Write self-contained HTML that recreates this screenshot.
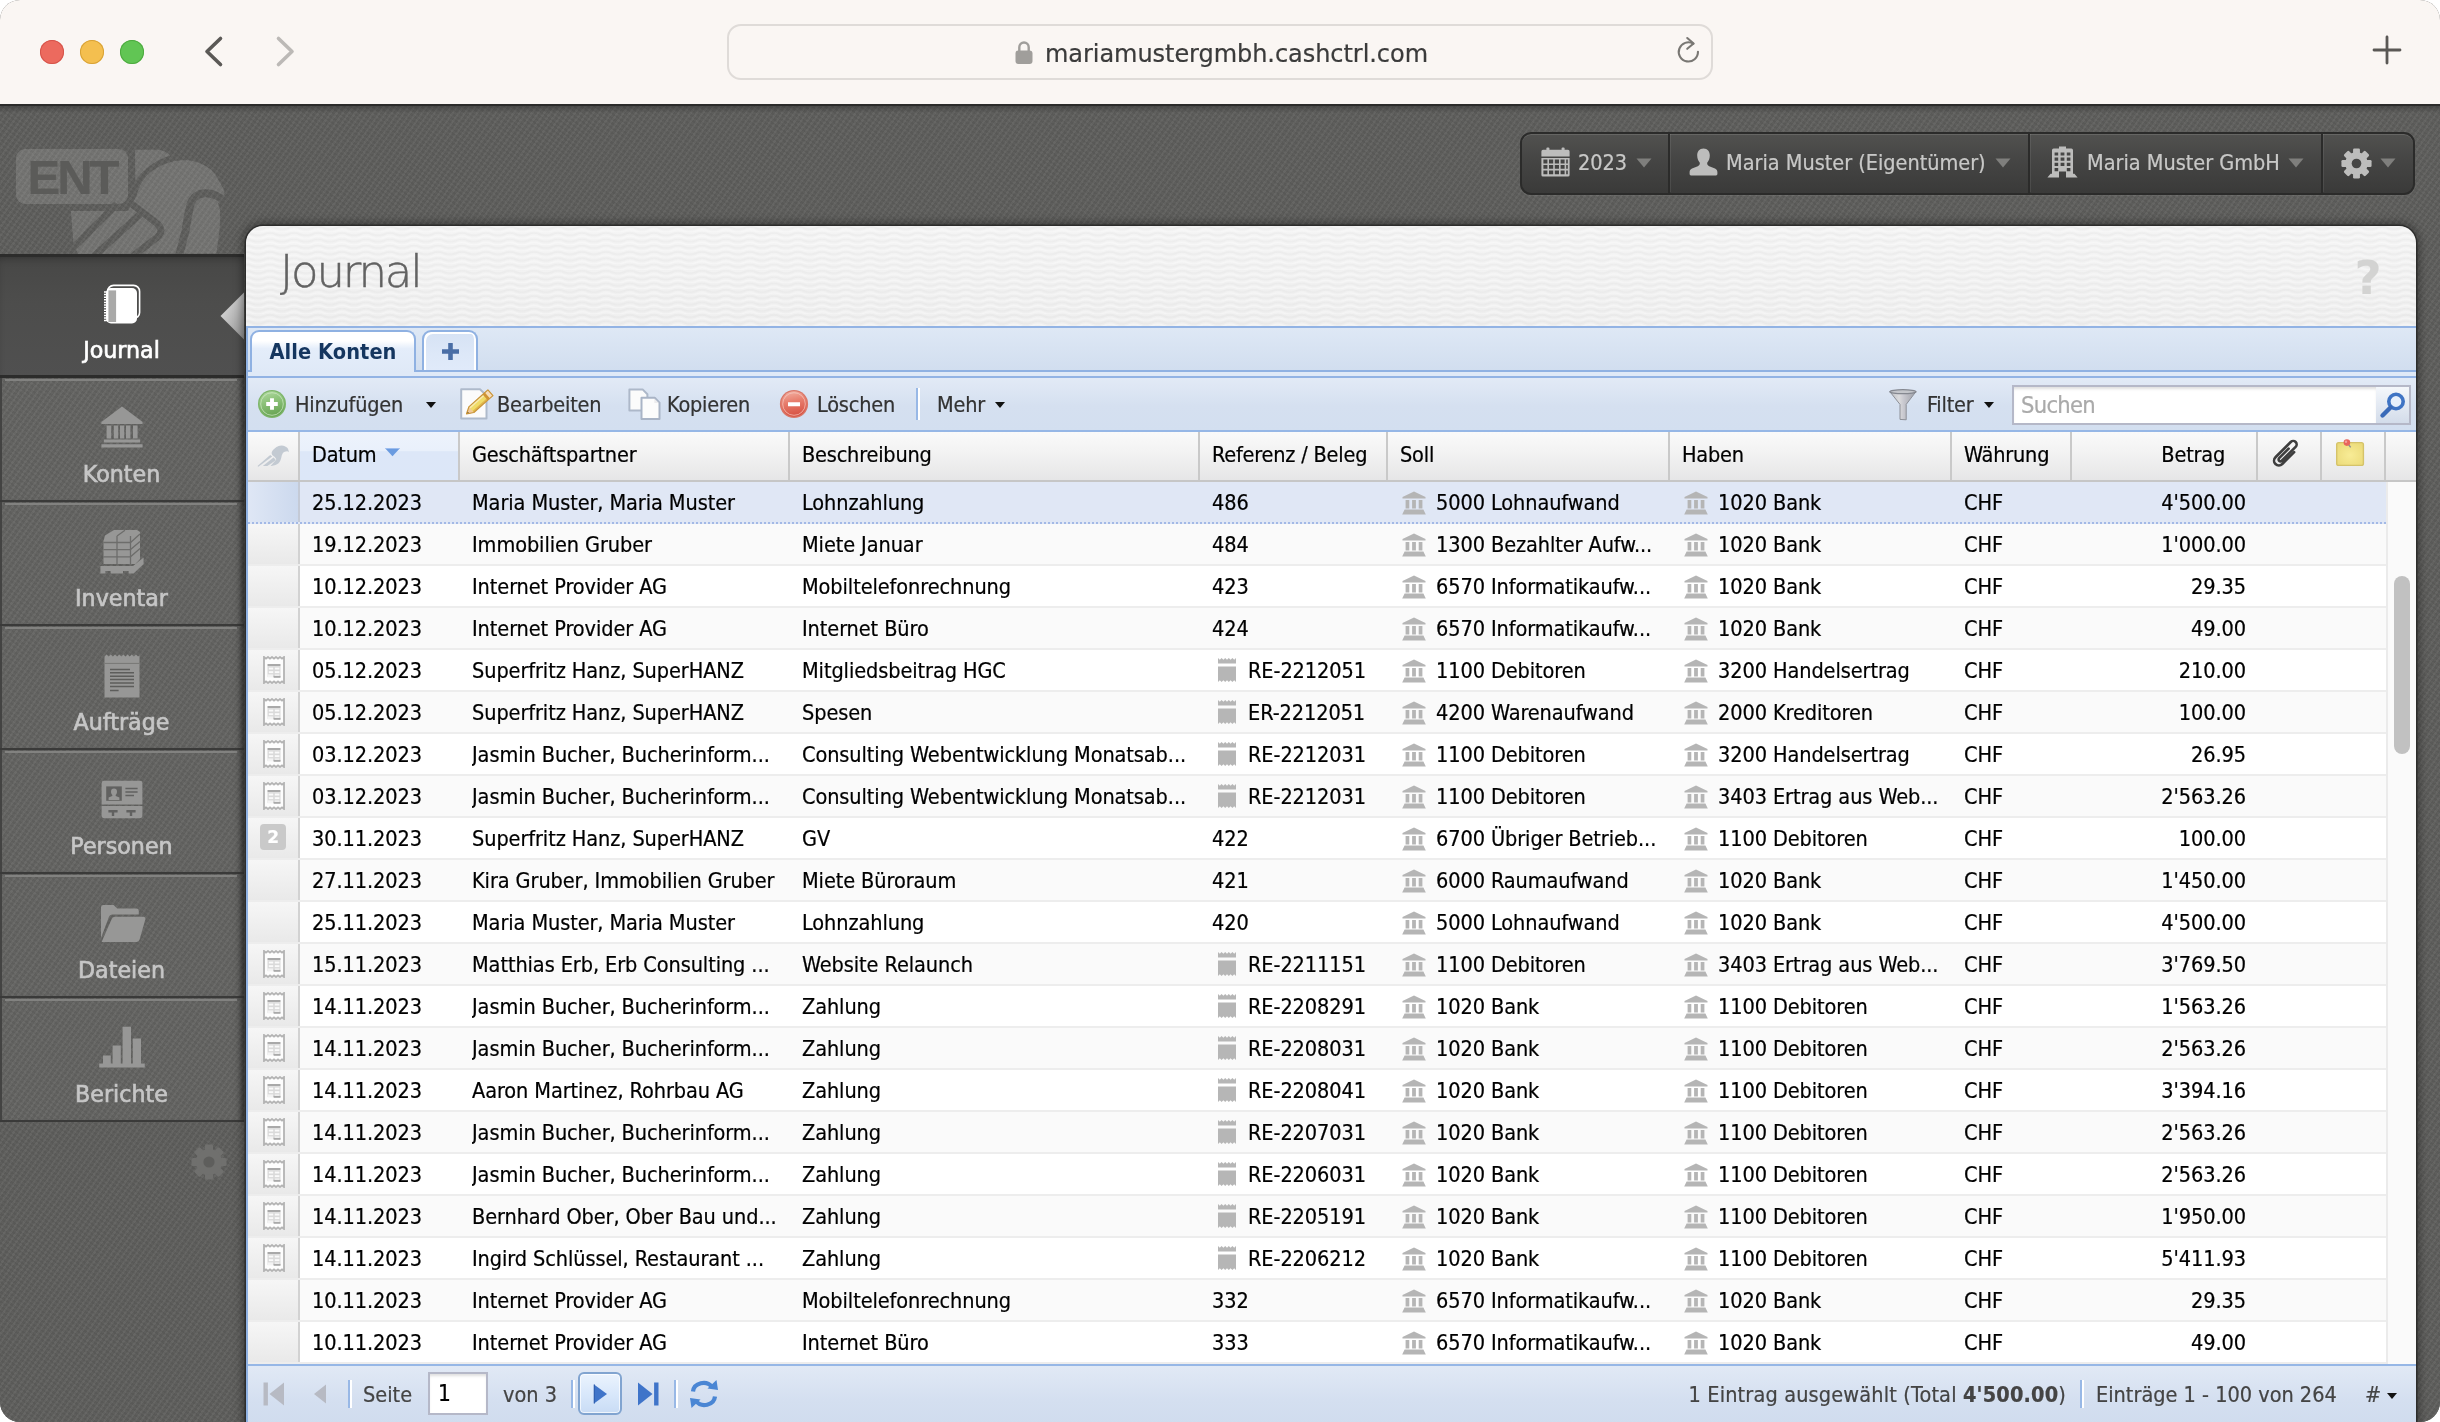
<!DOCTYPE html><html lang="de"><head><meta charset="utf-8"><title>Journal</title><style>
html,body{margin:0;padding:0;background:#fff;}
body{width:2440px;height:1422px;overflow:hidden;position:relative;font-family:"DejaVu Sans Condensed","Liberation Sans",sans-serif;font-size:21.5px;color:#000;-webkit-text-stroke:0.22px currentColor;}
*{box-sizing:border-box;}
.abs{position:absolute;}
.win{position:absolute;left:0;top:0;width:2440px;height:1422px;border-radius:20px;overflow:hidden;background:#5e5e5c;will-change:transform;}
.chrome{position:absolute;left:0;top:0;width:2440px;height:104px;background:#faf6f3;}
.tl{position:absolute;top:40px;width:24px;height:24px;border-radius:50%;}
.url{position:absolute;left:727px;top:24px;width:986px;height:56px;border:2px solid #dfdbd8;border-radius:14px;background:#faf6f3;}
.urltxt{position:absolute;left:1045px;top:33.500px;height:40px;line-height:40px;font-family:"DejaVu Sans","Liberation Sans",sans-serif;font-size:24px;color:#3b3b3b;white-space:nowrap;letter-spacing:-0.05px;}
.app{position:absolute;left:0;top:104px;width:2440px;height:1318px;background-color:#5e5e5c;
  background-image:repeating-linear-gradient(125deg,rgba(255,255,255,.03) 0,rgba(255,255,255,.03) 2px,rgba(0,0,0,.03) 2px,rgba(0,0,0,.03) 5px),repeating-linear-gradient(35deg,rgba(255,255,255,.02) 0,rgba(255,255,255,.02) 2px,rgba(0,0,0,.02) 2px,rgba(0,0,0,.02) 4px);}
.apptop{position:absolute;left:0;top:0;width:2440px;height:10px;background:linear-gradient(#2b2b2a 0,#2b2b2a 1.500px,rgba(50,50,49,.5) 2px,rgba(94,94,92,0) 9px);}
/* sidebar */
.sbi{position:absolute;left:0;width:244px;height:124px;background-color:rgba(255,255,255,.035);box-shadow:inset 2px 0 0 #434342,inset -5px 0 5px -2px rgba(0,0,0,.35);}
.sbi .hl{position:absolute;left:5px;right:7px;top:1px;height:2px;background:#828280;}
.sbi .dl{position:absolute;left:0;right:0;bottom:0;height:2px;background:#3a3a39;}
.sbi.act{background:linear-gradient(#474746,#4d4d4c 40%,#505050);box-shadow:inset 0 3px 0 #2c2c2b,inset 0 -3px 0 #2c2c2b,inset 0 8px 8px -4px rgba(0,0,0,.3);}
.sbl{position:absolute;left:0;width:243px;text-align:center;top:78px;height:36px;line-height:36px;font-family:"DejaVu Sans","Liberation Sans",sans-serif;font-size:22.2px;color:#c6c6c6;-webkit-text-stroke:0.65px #c6c6c6;letter-spacing:0;}
.act .sbl{color:#fff;-webkit-text-stroke:0.65px #fff;}
.sbic{position:absolute;left:0;top:0;}
/* top-right buttons */
.tbg{position:absolute;border-radius:11px;border:2px solid #2b2b2a;background:linear-gradient(#51514f,#454544 45%,#3a3a39);box-shadow:inset 0 1px 0 rgba(255,255,255,.12),0 1px 0 rgba(255,255,255,.06);}
.tbt{position:absolute;top:38px;height:42px;line-height:42px;font-size:21.5px;color:#c8c8c7;white-space:nowrap;letter-spacing:-0.02px;}
/* panel */
.panel{position:absolute;left:246px;top:122px;width:2170px;height:1240px;border-radius:17px 17px 0 0;background:linear-gradient(#f4f4f4 0,#efefef 100px,#efefef 100%);box-shadow:0 0 0 1.500px #2c2c2b,0 0 9px 4px rgba(0,0,0,.34);overflow:hidden;}
.pwave{position:absolute;left:0;top:0;}
.ptitle{position:absolute;left:34px;top:16px;height:60px;line-height:60px;font-family:"DejaVu Sans Light","DejaVu Sans","Liberation Sans",sans-serif;font-weight:200;font-size:45px;letter-spacing:-2.15px;color:#626262;-webkit-text-stroke:0.45px #626262;white-space:nowrap;}
.phelp{position:absolute;left:2106px;top:26px;width:32px;height:52px;line-height:52px;text-align:center;font-family:"DejaVu Sans","Liberation Sans",sans-serif;font-weight:bold;font-size:46px;color:#d3d3d2;}
.lb{position:absolute;left:0;top:100px;width:2px;height:1140px;background:#8fb1e2;}
.rb{position:absolute;left:2168px;top:100px;width:2px;height:1140px;background:#a9c3ea;}
.tabbar{position:absolute;left:0;top:100px;width:2170px;height:52px;border-top:2px solid #92b3e4;background:linear-gradient(#dee8f5,#cfdcee);}
.strip{position:absolute;left:0;top:44px;width:2170px;height:8px;background:#dfe9f7;border-top:2px solid #8fb1e2;border-bottom:2px solid #92b3e4;top:42px;}
.tab{position:absolute;top:2px;height:42px;border:2px solid #8fb1e2;border-bottom:none;border-radius:9px 9px 0 0;}
.tab.on{left:4px;width:166px;height:42px;background:linear-gradient(#ffffff 0,#ffffff 22%,#e4edfa 42%,#dfe9f7 100%);z-index:2;}
.tab.on span{position:absolute;left:0;right:0;top:0;height:40px;line-height:40px;text-align:center;font-weight:bold;font-size:21.6px;color:#15365f;letter-spacing:0.05px;-webkit-text-stroke:0;}
.tab.on:after{content:'';position:absolute;left:0;right:0;bottom:-2px;height:2px;background:#dfe9f7;}
.tab.off{left:176px;width:56px;height:40px;background:linear-gradient(#d6e2f4,#dde8f8 60%,#e0eafa);box-shadow:inset 2px 2px 0 #fff,inset -2px 0 0 #fff;}
.tb{position:absolute;left:0;top:152px;width:2170px;height:54px;border-bottom:2px solid #96b7e6;background:linear-gradient(#e2eaf6,#d5e0f0 55%,#d3dff0);}
.tbl{position:absolute;top:1px;height:52px;line-height:52px;color:#333;white-space:nowrap;font-size:21.5px;letter-spacing:-0.2px;}
.dd{position:absolute;width:0;height:0;border-left:5.500px solid transparent;border-right:5.500px solid transparent;border-top:6.500px solid #111;}
.sep{position:absolute;width:4px;background:linear-gradient(90deg,#98b8e6 0,#98b8e6 50%,#fff 50%,#fff 100%);}
.search{position:absolute;left:1766px;top:7px;width:366px;height:40px;background:#fff;border:2px solid #b5b8c8;box-shadow:inset 0 3px 3px -1px rgba(0,0,0,.13);}
.search span{position:absolute;left:7px;top:0;height:36px;line-height:37px;font-size:23.500px;color:#aaa;letter-spacing:-0.7px;}
.sbtn{position:absolute;left:2130px;top:7px;width:35px;height:40px;border:2px solid #b5b8c8;border-left:none;background:linear-gradient(#f4f7fb,#d3dcea);}
/* grid header */
.gh{position:absolute;left:2px;top:206px;width:2168px;height:50px;border-bottom:2px solid #c6c6c6;background:linear-gradient(#fafafa,#f2f2f2 45%,#e6e6e7);}
.hc{position:absolute;top:0;height:48px;line-height:46px;padding-left:12px;white-space:nowrap;border-right:2px solid #c9c9c9;font-size:21.500px;letter-spacing:-0.2px;}
.hc.sorted{background:linear-gradient(#edf3fc 0,#e9f0fb 39%,#dde7f8 41%,#dce7f8 100%);}
/* grid body */
.gb{position:absolute;left:2px;top:256px;width:2168px;height:882px;background:#fff;overflow:hidden;}
.r{position:absolute;left:0;width:2138px;height:42px;border-bottom:2px solid #ededed;background:#fff;line-height:41px;font-size:21.500px;letter-spacing:-0.08px;white-space:nowrap;}
.r.alt{background:#fafafa;}
.r.sel{background:#e0e7f5;border-bottom:2px dotted #a3b9e6;}
.r .n{position:absolute;left:0;top:0;width:52px;height:40px;border-right:2px solid #d2d2d2;background:linear-gradient(#f6f6f6,#e9e9e9);}
.r.sel .n{background:linear-gradient(90deg,#dfe7f5,#ccd9ee);border-right-color:#c4cad6;}
.c{position:absolute;top:0;height:40px;overflow:hidden;}
.c.rt{text-align:right;}
.sb{position:absolute;left:2138px;top:0;width:30px;height:882px;background:#fafafa;border-left:2px solid #ebebeb;}
.thumb{position:absolute;left:6px;top:94px;width:16px;height:178px;border-radius:8px;background:#c1c1c1;}
.badge{position:absolute;left:12px;top:6px;width:26px;height:26px;border-radius:4px;background:#c9c9c9;color:#fff;font-weight:bold;font-size:17px;line-height:26px;text-align:center;font-family:"DejaVu Sans","Liberation Sans",sans-serif;}
/* paging */
.pg{position:absolute;left:0;top:1138px;width:2170px;height:60px;border-top:2px solid #96b7e6;background:linear-gradient(#e1e9f5,#d4dff0 60%,#d0dcee);}
.pgt{position:absolute;top:3px;height:52px;line-height:52px;color:#444;white-space:nowrap;font-size:21.500px;letter-spacing:0;}
.pgin{position:absolute;left:182px;top:6px;width:60px;height:43px;border:2px solid #b5b8c8;background:#fff;box-shadow:inset 0 3px 3px -1px rgba(0,0,0,.13);}
.pgin span{position:absolute;left:8px;top:0;height:39px;line-height:39px;font-size:22.500px;color:#000;}
.pgbtn{position:absolute;left:332px;top:6px;width:44px;height:43px;border:2px solid #81a4d0;border-radius:6px;background:linear-gradient(#ebf3fd,#d9e8fb 50%,#c9dcf5);box-shadow:inset 0 0 0 1px rgba(255,255,255,.7);}
</style></head><body><div class="win"><div class="chrome">
<div class="tl" style="left:40px;background:#ec6a5e;box-shadow:inset 0 0 0 1px #d5544a;"></div>
<div class="tl" style="left:80px;background:#f4bf4f;box-shadow:inset 0 0 0 1px #d8a236;"></div>
<div class="tl" style="left:120px;background:#61c554;box-shadow:inset 0 0 0 1px #4daa3f;"></div>
<svg class="abs" style="left:200px;top:32px" width="30" height="40" viewBox="0 0 30 40"><path d="M20.5 6.5 L7 19.5 L20.5 32.5" fill="none" stroke="#5b5956" stroke-width="3.6" stroke-linecap="round" stroke-linejoin="round"/></svg>
<svg class="abs" style="left:270px;top:32px" width="30" height="40" viewBox="0 0 30 40"><path d="M8.5 6.5 L22 19.5 L8.5 32.5" fill="none" stroke="#bcb9b6" stroke-width="3.6" stroke-linecap="round" stroke-linejoin="round"/></svg>
<div class="url"></div>
<svg class="abs" style="left:1013px;top:39px" width="22" height="28" viewBox="0 0 22 28"><rect x="2.5" y="11.5" width="17" height="13.5" rx="3" fill="#a09e9b"/><path d="M6.3 12 V8.2 a4.7 4.7 0 0 1 9.4 0 V12" fill="none" stroke="#a09e9b" stroke-width="2.4"/></svg>
<div class="urltxt">mariamustergmbh.cashctrl.com</div>
<svg class="abs" style="left:1672px;top:34px" width="32" height="36" viewBox="0 0 32 36"><path d="M25.960 17.760 A9.600 9.600 0 1 1 21.300 9.700" fill="none" stroke="#797773" stroke-width="2.100" stroke-linecap="round"/><path d="M15.250 4 L21.600 9.500 L15.250 14.800" fill="none" stroke="#797773" stroke-width="2.100" stroke-linecap="round" stroke-linejoin="round"/></svg>
<svg class="abs" style="left:2370px;top:33px" width="34" height="34" viewBox="0 0 34 34"><path d="M17 4 V30 M4 17 H30" fill="none" stroke="#5a5855" stroke-width="2.8" stroke-linecap="round"/></svg>
</div>
<div class="app"><div class="apptop"></div><svg class="abs" style="left:0;top:36px" width="244" height="114" viewBox="0 0 244 114">
<defs><mask id="lgm" maskUnits="userSpaceOnUse" x="0" y="0" width="244" height="114">
<path fill="#fff" d="M70.900 71 L128 71 L136.400 56 C139 45 146 34 154.500 29.400 C166 22 176 20 186.500 20.200 C196 20.500 206 25 212 30.500 C216 35 221 44 223.800 49.700 C225 53 224.500 55 223.200 56 L217.900 63.500 C220 68 220.500 72 220 75.200 C220.500 85 218.500 100 216.300 113.600 L78 114 L73.500 104 Z"/>
<path fill="#fff" d="M135 9.700 L157.700 9.700 C163 10 167 12 170.500 15.600 C158 19 143 29 135.300 41 Z"/>
<rect x="16" y="9" width="112" height="55" rx="9" fill="#fff"/>
<g fill="none" stroke="#000" stroke-width="7" stroke-linejoin="round">
<path d="M130.500 63 L155 82 C162.500 87.500 162.500 92.500 157 97.500 L133 116"/>
<path d="M117 64 L69 112"/>
<path d="M142 72.500 L92 118"/>
<path d="M224 60.500 C214 52.500 203 51.500 197 55.500 C191 59.500 190 65 189.500 69 C187 80 186 88 185.400 91.200 L179 116" stroke-width="8"/>
</g></mask></defs>
<rect x="0" y="0" width="244" height="114" fill="rgba(255,255,255,.135)" mask="url(#lgm)"/></svg>
<div class="abs" style="left:15px;top:45px;width:114px;height:56px;line-height:56px;text-align:center;font-family:'Liberation Sans','DejaVu Sans',sans-serif;font-weight:bold;font-size:49px;letter-spacing:-3px;color:#5b5b59;padding-left:0px">ENT</div>
<div class="sbi act" style="top:150px;height:124px">
<svg class="abs" style="left:102px;top:29px" width="42" height="44" viewBox="0 0 42 44"><rect x="5.600" y="2.400" width="32" height="33" rx="6" fill="none" stroke="#fff" stroke-width="1.600"/><rect x="4" y="5" width="31" height="35.500" rx="5" fill="#fff"/><path d="M6.400 7.400 H14.100 V39 H6.400 Z" fill="#a9a9a8"/><path d="M2 9 H6 M2 11.600 H6 M2 14.200 H6 M2 16.800 H6 M2 19.400 H6 M2 22 H6 M2 24.600 H6 M2 27.200 H6 M2 29.800 H6 M2 32.400 H6 M2 35 H6 M2 37.400 H6" stroke="#fff" stroke-width="1.500"/></svg>
<div class="sbl">Journal</div></div>
<div class="sbi" style="top:274px;height:124px">
<div class="hl"></div><div class="dl"></div>
<svg class="abs" style="left:101px;top:28px" width="42" height="42" viewBox="0 0 42 42"><path fill="#979796" d="M21 0.6 L41.6 16 V18 H0.4 V16 Z M5.6 19.6 H10.2 V32.4 H5.6 Z M12.8 19.6 H17.2 V32.4 H12.8 Z M19 19.6 H23.2 V32.4 H19 Z M25 19.6 H29.4 V32.4 H25 Z M32 19.6 H36.6 V32.4 H32 Z M2.8 33.6 H39.2 V36.6 H2.8 Z M0.4 38.2 H41.6 V41.6 H0.4 Z"/></svg>
<div class="sbl">Konten</div></div>
<div class="sbi" style="top:398px;height:124px">
<div class="hl"></div><div class="dl"></div>
<svg class="abs" style="left:100px;top:27px" width="44" height="46" viewBox="0 0 44 46"><g fill="#979796"><path d="M5 6.5 L14 1 H37 L40 3 V30 L35.5 35 H3.5 V12 Z"/><path d="M0.4 37 H33 L43.6 28.4 V35 L33.6 44.6 H28.6 V42 H23 V44.6 H10.6 V42 H5.4 V44.6 H0.4 Z"/></g><g stroke="#5f5f5d" stroke-width="1.3" fill="none" opacity=".75"><path d="M3.5 13.5 H30.5 L40 5"/><path d="M3.5 20.6 H30.5 L40 12.4"/><path d="M3.5 27.8 H30.5 L40 19.6"/><path d="M30.5 7 V35"/><path d="M17 7 V35 M17 7 L25 1.2"/></g></svg>
<div class="sbl">Inventar</div></div>
<div class="sbi" style="top:522px;height:124px">
<div class="hl"></div><div class="dl"></div>
<svg class="abs" style="left:104px;top:28px" width="36" height="44" viewBox="0 0 36 44"><path fill="#979796" d="M0.5 2.6 L2.6 0.6 L4.7 2.6 L6.8 0.6 L8.9 2.6 L11 0.6 L13.1 2.6 L15.2 0.6 L17.3 2.6 L19.4 0.6 L21.5 2.6 L23.6 0.6 L25.7 2.6 L27.8 0.6 L29.9 2.6 L32 0.6 L34.1 2.6 L35.5 1.2 V43.4 H0.5 Z"/><g stroke="#5d5d5b" stroke-width="1.5"><path d="M0.5 9.4 H35.5" stroke="#777775" stroke-width="1"/><path d="M6 15.4 H26 M6 18.8 H30 M6 22.2 H30 M6 25.6 H30 M6 29 H30 M6 32.4 H30 M6 36.6 H14.6"/></g></svg>
<div class="sbl">Aufträge</div></div>
<div class="sbi" style="top:646px;height:124px">
<div class="hl"></div><div class="dl"></div>
<svg class="abs" style="left:101px;top:30px" width="42" height="40" viewBox="0 0 42 40"><path fill="#979796" d="M3 0.8 H39 A2.4 2.4 0 0 1 41.4 3.2 V24.4 H0.6 V3.2 A2.4 2.4 0 0 1 3 0.8 Z M0.6 26 H41.4 V35.8 A2.4 2.4 0 0 1 39 38.2 H3 A2.4 2.4 0 0 1 0.6 35.8 Z"/><rect x="5.2" y="6.4" width="15.6" height="14.4" fill="#616160"/><path fill="#979796" d="M13 8.4 a3 3.3 0 0 1 3 3.3 c0 1.6 -.7 2.6 -1.4 3.2 l.2 1 l3.6 1.6 V20 H7.6 V17.5 l3.6 -1.6 l.2 -1 C10.7 14.3 10 13.300 10 11.7 A3 3.3 0 0 1 13 8.400 Z"/><path stroke="#616160" stroke-width="1.5" d="M24.400 8.400 H36.600 M24.400 12 H36.600 M24.400 15.600 H33"/><path fill="#616160" d="M7.400 30 H16.600 V32.600 H13.200 V36 H10.800 V32.600 H7.400 Z M25.400 30 H34.600 V32.600 H31.200 V36 H28.800 V32.600 H25.400 Z"/></svg>
<div class="sbl">Personen</div></div>
<div class="sbi" style="top:770px;height:124px">
<div class="hl"></div><div class="dl"></div>
<svg class="abs" style="left:100px;top:30px" width="46" height="40" viewBox="0 0 46 40"><path fill="#979796" d="M1 3.400 A2.400 2.400 0 0 1 3.400 1 H13.600 L17.200 4.600 H36.400 A2.400 2.400 0 0 1 38.800 7 V10.400 H12.600 A4 4 0 0 0 8.800 13.200 L1 34 Z"/><path fill="#979796" d="M11.600 15.200 A3.200 3.200 0 0 1 14.600 12.800 H43.400 A2 2 0 0 1 45.300 15.400 L39.600 35.600 A3.200 3.200 0 0 1 36.600 38 H1.600 Z"/></svg>
<div class="sbl">Dateien</div></div>
<div class="sbi" style="top:894px;height:124px">
<div class="hl"></div><div class="dl"></div>
<svg class="abs" style="left:99px;top:28px" width="46" height="42" viewBox="0 0 46 42"><path fill="#979796" d="M4 29.600 H11.800 V37.600 H4 Z M13.600 19.600 H21.800 V37.600 H13.600 Z M23.600 0.800 H32 V37.600 H23.600 Z M33.800 12.600 H42 V37.600 H33.800 Z M0.200 37.600 H45.800 V41.400 H0.200 Z"/></svg>
<div class="sbl">Berichte</div></div>
<svg class="abs" style="left:218px;top:186px" width="28" height="52" viewBox="0 0 28 52"><defs><linearGradient id="ptg" x1="0" y1="0" x2="1" y2="1"><stop offset="0" stop-color="#e6e6e6"/><stop offset="1" stop-color="#8f8f8f"/></linearGradient></defs><path d="M26 2.500 V49.500 L2.500 26 Z" fill="url(#ptg)"/></svg>
<svg class="abs" style="left:191px;top:1040px" width="36" height="36" viewBox="0 0 36 36"><g fill="#70706e"><g id="gt"><rect x="14" y="0.500" width="8" height="35" rx="1.500"/></g><rect x="14" y="0.500" width="8" height="35" rx="1.500" transform="rotate(45 18 18)"/><rect x="14" y="0.500" width="8" height="35" rx="1.500" transform="rotate(90 18 18)"/><rect x="14" y="0.500" width="8" height="35" rx="1.500" transform="rotate(135 18 18)"/><circle cx="18" cy="18" r="13"/></g><circle cx="18" cy="18" r="5.600" fill="#5e5e5c"/></svg><div class="tbg" style="left:1520px;top:28px;width:895px;height:63px"></div>
<div class="abs" style="left:1668px;top:28px;width:2px;height:62px;background:#2b2b2a"></div><div class="abs" style="left:1670px;top:30px;width:1px;height:58px;background:rgba(255,255,255,.08)"></div>
<div class="abs" style="left:2028px;top:28px;width:2px;height:62px;background:#2b2b2a"></div><div class="abs" style="left:2030px;top:30px;width:1px;height:58px;background:rgba(255,255,255,.08)"></div>
<div class="abs" style="left:2321px;top:28px;width:2px;height:62px;background:#2b2b2a"></div><div class="abs" style="left:2323px;top:30px;width:1px;height:58px;background:rgba(255,255,255,.08)"></div>
<svg class="abs" style="left:1541px;top:43px" width="29" height="30" viewBox="0 0 29 30"><g fill="#bdbdbc"><rect x="5.400" y="0.400" width="3" height="5.600" rx="1"/><rect x="20.600" y="0.400" width="3" height="5.600" rx="1"/><path d="M0.400 4.400 A1.600 1.600 0 0 1 2 2.800 H27 A1.600 1.600 0 0 1 28.600 4.400 V9.600 H0.400 Z"/><path d="M0.400 11 H28.600 V28 A1.600 1.600 0 0 1 27 29.600 H2 A1.600 1.600 0 0 1 0.400 28 Z M2.400 12.600 V16.400 H6.400 V12.600 Z M8 12.600 V16.400 H12.200 V12.600 Z M13.800 12.600 V16.400 H18 V12.600 Z M19.600 12.600 V16.400 H23.600 V12.600 Z M25.200 12.600 V16.400 H26.800 V12.600 Z M2.400 18 V21.800 H6.400 V18 Z M8 18 V21.800 H12.200 V18 Z M13.800 18 V21.800 H18 V18 Z M19.600 18 V21.800 H23.600 V18 Z M25.200 18 V21.800 H26.800 V18 Z M2.400 23.400 V27.200 H6.400 V23.400 Z M8 23.400 V27.200 H12.200 V23.400 Z M13.800 23.400 V27.200 H18 V23.400 Z M19.600 23.400 V27.200 H23.600 V23.400 Z M25.200 23.400 V27.200 H26.800 V23.400 Z" fill-rule="evenodd"/></g></svg>
<div class="tbt" style="left:1578px">2023</div>
<svg class="abs" style="left:1636px;top:54px" width="16" height="10" viewBox="0 0 16 10"><path d="M0.500 0.500 H15.500 L8 9.600 Z" fill="#7f7f7d"/></svg>
<svg class="abs" style="left:1689px;top:44px" width="29" height="28" viewBox="0 0 29 28"><path fill="#bdbdbc" d="M14.500 0.600 C18.600 0.600 20.800 3.600 20.800 7.600 C20.800 10.800 19.600 13.200 18.200 14.800 C18 16.400 18.600 17.600 20.200 18.200 L26 20.600 C27.600 21.400 28.400 22.600 28.400 24.200 V26 A1.400 1.400 0 0 1 27 27.400 H2 A1.400 1.400 0 0 1 0.600 26 V24.200 C0.600 22.600 1.400 21.400 3 20.600 L8.800 18.200 C10.400 17.600 11 16.400 10.800 14.800 C9.400 13.200 8.200 10.800 8.200 7.600 C8.200 3.600 10.400 0.600 14.500 0.600 Z"/></svg>
<div class="tbt" style="left:1726px">Maria Muster (Eigentümer)</div>
<svg class="abs" style="left:1995px;top:54px" width="16" height="10" viewBox="0 0 16 10"><path d="M0.500 0.500 H15.500 L8 9.600 Z" fill="#7f7f7d"/></svg>
<svg class="abs" style="left:2047px;top:42px" width="31" height="32" viewBox="0 0 31 32"><path fill="#bdbdbc" fill-rule="evenodd" d="M12 0.600 H19 V2.600 H24.400 A1.600 1.600 0 0 1 26 4.200 V27.800 H27.400 L30.600 31.600 H19 V25.600 H12 V31.600 H0.400 L3.600 27.800 H5 V4.200 A1.600 1.600 0 0 1 6.600 2.600 H12 Z M7.600 6.400 V9.600 H11.200 V6.400 Z M13.600 6.400 V9.600 H17.400 V6.400 Z M19.800 6.400 V9.600 H23.400 V6.400 Z M7.600 11.600 V14.800 H11.200 V11.600 Z M13.600 11.600 V14.800 H17.400 V11.600 Z M19.800 11.600 V14.800 H23.400 V11.600 Z M7.600 16.800 V20 H11.200 V16.800 Z M13.600 16.800 V20 H17.400 V16.800 Z M19.800 16.800 V20 H23.400 V16.800 Z M7.600 22 V25.200 H11.200 V22 Z M19.800 22 V25.200 H23.400 V22 Z"/></svg>
<div class="tbt" style="left:2087px">Maria Muster GmbH</div>
<svg class="abs" style="left:2288px;top:54px" width="16" height="10" viewBox="0 0 16 10"><path d="M0.500 0.500 H15.500 L8 9.600 Z" fill="#7f7f7d"/></svg>
<svg class="abs" style="left:2341px;top:44px" width="31" height="31" viewBox="0 0 36 36"><g fill="#bdbdbc"><rect x="14" y="0.500" width="8" height="35" rx="1.500"/><rect x="14" y="0.500" width="8" height="35" rx="1.500" transform="rotate(45 18 18)"/><rect x="14" y="0.500" width="8" height="35" rx="1.500" transform="rotate(90 18 18)"/><rect x="14" y="0.500" width="8" height="35" rx="1.500" transform="rotate(135 18 18)"/><circle cx="18" cy="18" r="13"/></g><circle cx="18" cy="18" r="5.600" fill="#464645"/></svg>
<svg class="abs" style="left:2380px;top:54px" width="16" height="10" viewBox="0 0 16 10"><path d="M0.500 0.500 H15.500 L8 9.600 Z" fill="#7f7f7d"/></svg><div class="panel">
<svg class="pwave" width="2170" height="100"><defs><pattern id="wv" width="24" height="6.300" patternUnits="userSpaceOnUse"><path d="M-6 2 Q0 -0.500 6 2 T18 2 T30 2" fill="none" stroke="#000" stroke-opacity=".022" stroke-width="1.800"/><path d="M-6 5.150 Q0 2.650 6 5.150 T18 5.150 T30 5.150" fill="none" stroke="#fff" stroke-opacity=".35" stroke-width="1.500"/></pattern></defs><rect width="2170" height="100" fill="url(#wv)"/></svg>
<div class="ptitle">Journal</div><div class="phelp">?</div>
<div class="tabbar"><div class="strip"></div><div class="tab on"><span>Alle Konten</span></div><div class="tab off"><svg class="abs" style="left:18px;top:11px" width="17" height="17" viewBox="0 0 20 20"><path d="M10 1 V19 M1 10 H19" stroke="#4a6ea6" stroke-width="5.400" stroke-linecap="round"/></svg></div></div>
<div class="tb">
<svg class="abs" style="left:11px;top:11px" width="30" height="30" viewBox="0 0 30 30"><defs><linearGradient id="ga" x1="0" y1="0" x2="0.300" y2="1"><stop offset="0" stop-color="#b4dba5"/><stop offset=".45" stop-color="#8fc47c"/><stop offset="1" stop-color="#6aa656"/></linearGradient></defs><circle cx="15" cy="15" r="14" fill="#7db569"/><circle cx="15" cy="15" r="12.800" fill="url(#ga)"/><circle cx="15" cy="15" r="11.300" fill="none" stroke="#cbe7c0" stroke-width="1" opacity=".75"/><path d="M15 9.200 V20.800 M9.200 15 H20.800" stroke="#fff" stroke-width="3.900"/></svg>
<div class="tbl" style="left:49px">Hinzufügen</div><div class="dd" style="left:180px;top:24px"></div>
<svg class="abs" style="left:213px;top:8px" width="36" height="36" viewBox="0 0 36 36"><path d="M2.200 3.200 H21 L27.500 9.600 V32.500 H2.200 Z" fill="#fbfbfb" stroke="#aebacb" stroke-width="2" stroke-linejoin="round"/><g transform="translate(7.500 28) rotate(-41.600)"><path d="M0 0 L6.500 -3.800 H32 V3.800 H6.500 Z" fill="#f0dc68"/><path d="M6.500 -3.800 H26 V-1.600 H6.500 Z" fill="#f7ecae"/><path d="M6.500 1.800 H26 V3.800 H6.500 Z" fill="#e0b64c"/><path d="M0 0 L6.500 -3.800 V3.800 Z" fill="#f1c99a"/><path d="M0 0 L2.600 -1.500 V1.500 Z" fill="#6a5524"/><rect x="25" y="-3.800" width="3" height="7.600" fill="#cf9336"/><rect x="28" y="-3.800" width="4" height="7.600" fill="#f6dcbc"/><path d="M0 0 L6.500 -3.800 H32 V3.800 H6.500 Z" fill="none" stroke="#c9943a" stroke-width="1.200" stroke-linejoin="round"/></g></svg>
<div class="tbl" style="left:251px">Bearbeiten</div>
<svg class="abs" style="left:381px;top:8px" width="36" height="38" viewBox="0 0 36 38"><path d="M2.400 3.400 H15.600 L20.400 8.200 V24.600 H2.400 Z" fill="#fbfbfb" stroke="#adb8c9" stroke-width="2" stroke-linejoin="round"/><path d="M14.500 11.800 H27.700 L32.500 16.600 V33 H14.500 Z" fill="#fcfcfc" stroke="#a9b4c6" stroke-width="2" stroke-linejoin="round"/><path d="M27.300 12.600 V17 H31.700" fill="#ececee" stroke="none"/></svg>
<div class="tbl" style="left:421px">Kopieren</div>
<svg class="abs" style="left:533px;top:11px" width="30" height="30" viewBox="0 0 30 30"><defs><linearGradient id="gd" x1="0" y1="0" x2="0.200" y2="1"><stop offset="0" stop-color="#f3b6a8"/><stop offset=".45" stop-color="#e8806f"/><stop offset="1" stop-color="#d85445"/></linearGradient></defs><circle cx="15" cy="15" r="14.100" fill="#d97768"/><circle cx="15" cy="15" r="12.800" fill="url(#gd)"/><circle cx="15" cy="15" r="11.300" fill="none" stroke="#f6c9c0" stroke-width="1" opacity=".7"/><path d="M9 15.300 H21" stroke="#fff" stroke-width="4"/></svg>
<div class="tbl" style="left:571px">Löschen</div>
<div class="sep" style="left:670px;top:10px;height:32px"></div>
<div class="tbl" style="left:691px">Mehr</div><div class="dd" style="left:749px;top:24px"></div>
<svg class="abs" style="left:1642px;top:10px" width="30" height="34" viewBox="0 0 30 34"><defs><linearGradient id="gf" x1="0" y1="0" x2="1" y2="0"><stop offset="0" stop-color="#b9bbc0"/><stop offset=".35" stop-color="#dcdcde"/><stop offset=".52" stop-color="#c9c9d0"/><stop offset="1" stop-color="#9c9ea6"/></linearGradient></defs><path d="M1.800 3.600 L12 16.400 V31.400 L18.200 31.800 V16.400 L28 3.600 Z" fill="url(#gf)" stroke="#8d9098" stroke-width="1"/><ellipse cx="14.900" cy="3.700" rx="13.100" ry="2" fill="#c4c6cb" stroke="#858890" stroke-width="1.200"/></svg>
<div class="tbl" style="left:1681px">Filter</div><div class="dd" style="left:1738px;top:24px"></div>
<div class="search"><span>Suchen</span></div><div class="sbtn"><svg class="abs" style="left:3px;top:4px" width="28" height="28" viewBox="0 0 28 28"><circle cx="17" cy="10.500" r="7.200" fill="#e8f0fb" stroke="#3f74c4" stroke-width="3.600"/><path d="M11.500 16.500 L3.500 24.500" stroke="#3a6ab8" stroke-width="4.400" stroke-linecap="round"/></svg></div>
</div>
<div class="gh">
<div class="hc" style="left:0px;width:52px;padding:0;"><svg class="abs" style="left:9px;top:13px" width="34" height="24" viewBox="0 0 34 24"><g fill="#c3cad2"><path d="M24.700 0.400 C27 0.600 29 1.500 30 2.600 C31.200 4 31.800 5.800 31.800 7.300 C31 6.600 30.500 6.400 30 6.300 C28.500 6.400 27 7 25.900 8 C25 9.500 24.500 11 24.200 12.900 C23.800 14.500 23.300 15.800 22.600 17 C21.500 18.800 19.500 19.800 17.700 20.200 C16 20.700 14.800 20.900 13.600 20.900 L19.300 14.500 C19 13.500 18.500 12.700 17.700 12 L15.200 10 C14.600 9 14.600 8 14.800 7.100 C15.400 5.500 16.500 4.300 17.700 3.400 C19 2.300 20 1.700 21 1.200 C22.200 0.700 23.500 0.400 24.700 0.400 Z"/><path d="M13.200 10 L15.200 11.600 L1.300 21.700 L0.500 21 Z"/><path d="M16.500 12.500 L18.500 14.500 C18.400 15.200 18.100 15.700 17.700 16.100 L10.300 21.100 H5.800 Z"/></g></svg></div>
<div class="hc sorted" style="left:52px;width:160px;">Datum<svg class="abs" style="left:85px;top:16px" width="15" height="9" viewBox="0 0 15 9"><path d="M0.300 0.500 H14.700 L7.500 8.300 Z" fill="#6a9be0"/><path d="M0.300 0.500 H14.700" stroke="#9dbdee" stroke-width="1"/></svg></div>
<div class="hc" style="left:212px;width:330px;">Geschäftspartner</div>
<div class="hc" style="left:542px;width:410px;">Beschreibung</div>
<div class="hc" style="left:952px;width:188px;">Referenz / Beleg</div>
<div class="hc" style="left:1140px;width:282px;">Soll</div>
<div class="hc" style="left:1422px;width:282px;">Haben</div>
<div class="hc" style="left:1704px;width:120px;">Währung</div>
<div class="hc" style="left:1824px;width:186px;text-align:right;padding-right:31px;padding-left:0;">Betrag</div>
<div class="hc" style="left:2010px;width:64px;padding:0;"><svg class="abs" style="left:10px;top:4px" width="36" height="40" viewBox="0 0 36 40"><g transform="translate(18 17.500) rotate(45) scale(.96)"><path d="M5 -7 V10.500 A5 5 0 0 1 -5 10.500 V-12 A3.600 3.600 0 0 1 2.200 -12 V8.500 A1.900 1.900 0 0 1 -1.600 8.500 V-5.500" fill="none" stroke="#3e3e3e" stroke-width="2.700" stroke-linecap="round"/></g></svg></div>
<div class="hc" style="left:2074px;width:64px;padding:0;"><svg class="abs" style="left:12px;top:4px" width="34" height="34" viewBox="0 0 34 34"><defs><radialGradient id="gn" cx=".5" cy=".55" r=".7"><stop offset="0" stop-color="#f8ec96"/><stop offset="1" stop-color="#ead977"/></radialGradient></defs><rect x="2.700" y="6.600" width="26.700" height="22.800" rx="2" fill="url(#gn)" stroke="#d5c36a" stroke-width="1.400"/><path d="M13 6.600 L16.700 11.400" stroke="#8f8f8f" stroke-width="1.500"/><circle cx="12.900" cy="6.600" r="3.300" fill="#e8645c"/><circle cx="12" cy="5.700" r="1.200" fill="#f4a09a"/></svg></div>
</div>
<div class="gb">
<div class="r sel" style="top:0px">
<div class="n"></div>
<div class="c" style="left:64px;width:146px;">25.12.2023</div>
<div class="c" style="left:224px;width:316px;">Maria Muster, Maria Muster</div>
<div class="c" style="left:554px;width:396px;">Lohnzahlung</div>
<div class="c" style="left:964px;width:174px;">486</div>
<svg class="abs" style="left:1154px;top:9px" width="24" height="24" fill="#b5b5b5" viewBox="0 0 24 24"><path d="M12 0.5 L23.5 6 V7.6 H0.5 V6 Z M3.6 9 H7.3 V17.6 H3.6 Z M10.1 9 H13.9 V17.6 H10.1 Z M16.7 9 H20.4 V17.6 H16.7 Z M2.6 18.6 H21.4 L23.8 23.4 H0.2 Z"/></svg>
<div class="c" style="left:1188px;width:232px">5000 Lohnaufwand</div>
<svg class="abs" style="left:1436px;top:9px" width="24" height="24" fill="#b5b5b5" viewBox="0 0 24 24"><path d="M12 0.5 L23.5 6 V7.6 H0.5 V6 Z M3.6 9 H7.3 V17.6 H3.6 Z M10.1 9 H13.9 V17.6 H10.1 Z M16.7 9 H20.4 V17.6 H16.7 Z M2.6 18.6 H21.4 L23.8 23.4 H0.2 Z"/></svg>
<div class="c" style="left:1470px;width:232px">1020 Bank</div>
<div class="c" style="left:1716px;width:106px;">CHF</div>
<div class="c rt" style="left:1824px;width:174px">4'500.00</div>
</div>
<div class="r alt" style="top:42px">
<div class="n"></div>
<div class="c" style="left:64px;width:146px;">19.12.2023</div>
<div class="c" style="left:224px;width:316px;">Immobilien Gruber</div>
<div class="c" style="left:554px;width:396px;">Miete Januar</div>
<div class="c" style="left:964px;width:174px;">484</div>
<svg class="abs" style="left:1154px;top:9px" width="24" height="24" fill="#b5b5b5" viewBox="0 0 24 24"><path d="M12 0.5 L23.5 6 V7.6 H0.5 V6 Z M3.6 9 H7.3 V17.6 H3.6 Z M10.1 9 H13.9 V17.6 H10.1 Z M16.7 9 H20.4 V17.6 H16.7 Z M2.6 18.6 H21.4 L23.8 23.4 H0.2 Z"/></svg>
<div class="c" style="left:1188px;width:232px">1300 Bezahlter Aufw...</div>
<svg class="abs" style="left:1436px;top:9px" width="24" height="24" fill="#b5b5b5" viewBox="0 0 24 24"><path d="M12 0.5 L23.5 6 V7.6 H0.5 V6 Z M3.6 9 H7.3 V17.6 H3.6 Z M10.1 9 H13.9 V17.6 H10.1 Z M16.7 9 H20.4 V17.6 H16.7 Z M2.6 18.6 H21.4 L23.8 23.4 H0.2 Z"/></svg>
<div class="c" style="left:1470px;width:232px">1020 Bank</div>
<div class="c" style="left:1716px;width:106px;">CHF</div>
<div class="c rt" style="left:1824px;width:174px">1'000.00</div>
</div>
<div class="r" style="top:84px">
<div class="n"></div>
<div class="c" style="left:64px;width:146px;">10.12.2023</div>
<div class="c" style="left:224px;width:316px;">Internet Provider AG</div>
<div class="c" style="left:554px;width:396px;">Mobiltelefonrechnung</div>
<div class="c" style="left:964px;width:174px;">423</div>
<svg class="abs" style="left:1154px;top:9px" width="24" height="24" fill="#b5b5b5" viewBox="0 0 24 24"><path d="M12 0.5 L23.5 6 V7.6 H0.5 V6 Z M3.6 9 H7.3 V17.6 H3.6 Z M10.1 9 H13.9 V17.6 H10.1 Z M16.7 9 H20.4 V17.6 H16.7 Z M2.6 18.6 H21.4 L23.8 23.4 H0.2 Z"/></svg>
<div class="c" style="left:1188px;width:232px">6570 Informatikaufw...</div>
<svg class="abs" style="left:1436px;top:9px" width="24" height="24" fill="#b5b5b5" viewBox="0 0 24 24"><path d="M12 0.5 L23.5 6 V7.6 H0.5 V6 Z M3.6 9 H7.3 V17.6 H3.6 Z M10.1 9 H13.9 V17.6 H10.1 Z M16.7 9 H20.4 V17.6 H16.7 Z M2.6 18.6 H21.4 L23.8 23.4 H0.2 Z"/></svg>
<div class="c" style="left:1470px;width:232px">1020 Bank</div>
<div class="c" style="left:1716px;width:106px;">CHF</div>
<div class="c rt" style="left:1824px;width:174px">29.35</div>
</div>
<div class="r alt" style="top:126px">
<div class="n"></div>
<div class="c" style="left:64px;width:146px;">10.12.2023</div>
<div class="c" style="left:224px;width:316px;">Internet Provider AG</div>
<div class="c" style="left:554px;width:396px;">Internet Büro</div>
<div class="c" style="left:964px;width:174px;">424</div>
<svg class="abs" style="left:1154px;top:9px" width="24" height="24" fill="#b5b5b5" viewBox="0 0 24 24"><path d="M12 0.5 L23.5 6 V7.6 H0.5 V6 Z M3.6 9 H7.3 V17.6 H3.6 Z M10.1 9 H13.9 V17.6 H10.1 Z M16.7 9 H20.4 V17.6 H16.7 Z M2.6 18.6 H21.4 L23.8 23.4 H0.2 Z"/></svg>
<div class="c" style="left:1188px;width:232px">6570 Informatikaufw...</div>
<svg class="abs" style="left:1436px;top:9px" width="24" height="24" fill="#b5b5b5" viewBox="0 0 24 24"><path d="M12 0.5 L23.5 6 V7.6 H0.5 V6 Z M3.6 9 H7.3 V17.6 H3.6 Z M10.1 9 H13.9 V17.6 H10.1 Z M16.7 9 H20.4 V17.6 H16.7 Z M2.6 18.6 H21.4 L23.8 23.4 H0.2 Z"/></svg>
<div class="c" style="left:1470px;width:232px">1020 Bank</div>
<div class="c" style="left:1716px;width:106px;">CHF</div>
<div class="c rt" style="left:1824px;width:174px">49.00</div>
</div>
<div class="r" style="top:168px">
<div class="n"><svg class="abs" style="left:15px;top:6px" width="22" height="28" viewBox="0 0 22 28"><path d="M1 1 L3 2.6 L5 1 L7 2.6 L9 1 L11 2.6 L13 1 L15 2.6 L17 1 L19 2.6 L21 1 V27 L19 25.4 L17 27 L15 25.4 L13 27 L11 25.4 L9 27 L7 25.4 L5 27 L3 25.4 L1 27 Z" fill="#fdfdfd" stroke="#b3b3b3" stroke-width="1.8" stroke-linejoin="miter"/><rect x="4.5" y="8" width="13" height="2.2" fill="#a9a9a9"/><rect x="4.5" y="10.2" width="13" height="10.8" fill="#dadada"/><rect x="5.8" y="11.6" width="4.4" height="1.9" fill="#fafafa"/><rect x="11.8" y="11.6" width="4.6" height="1.9" fill="#fafafa"/><rect x="5.8" y="15.2" width="4.4" height="1.9" fill="#fafafa"/><rect x="11.8" y="15.2" width="4.6" height="1.9" fill="#fafafa"/><rect x="4.5" y="18.4" width="5.6" height="3" fill="#f3f3f3"/><rect x="11.8" y="18.6" width="4.6" height="1.2" fill="#fafafa"/><rect x="10.6" y="19.9" width="6.9" height="1.9" fill="#a9a9a9"/></svg></div>
<div class="c" style="left:64px;width:146px;">05.12.2023</div>
<div class="c" style="left:224px;width:316px;">Superfritz Hanz, SuperHANZ</div>
<div class="c" style="left:554px;width:396px;">Mitgliedsbeitrag HGC</div>
<svg class="abs" style="left:970px;top:8px" width="18" height="24" fill="#b6b6b6" viewBox="0 0 18 24"><path d="M0 0 L1.8 1.8 L3.6 0 L5.4 1.8 L7.2 0 L9 1.8 L10.8 0 L12.6 1.8 L14.4 0 L16.2 1.8 L18 0 V5.6 H0 Z M0 8.4 H18 V24 L16.2 22.2 L14.4 24 L12.6 22.2 L10.8 24 L9 22.2 L7.2 24 L5.4 22.2 L3.6 24 L1.8 22.2 L0 24 Z"/></svg>
<div class="c" style="left:1000px;width:138px">RE-2212051</div>
<svg class="abs" style="left:1154px;top:9px" width="24" height="24" fill="#b5b5b5" viewBox="0 0 24 24"><path d="M12 0.5 L23.5 6 V7.6 H0.5 V6 Z M3.6 9 H7.3 V17.6 H3.6 Z M10.1 9 H13.9 V17.6 H10.1 Z M16.7 9 H20.4 V17.6 H16.7 Z M2.6 18.6 H21.4 L23.8 23.4 H0.2 Z"/></svg>
<div class="c" style="left:1188px;width:232px">1100 Debitoren</div>
<svg class="abs" style="left:1436px;top:9px" width="24" height="24" fill="#b5b5b5" viewBox="0 0 24 24"><path d="M12 0.5 L23.5 6 V7.6 H0.5 V6 Z M3.6 9 H7.3 V17.6 H3.6 Z M10.1 9 H13.9 V17.6 H10.1 Z M16.7 9 H20.4 V17.6 H16.7 Z M2.6 18.6 H21.4 L23.8 23.4 H0.2 Z"/></svg>
<div class="c" style="left:1470px;width:232px">3200 Handelsertrag</div>
<div class="c" style="left:1716px;width:106px;">CHF</div>
<div class="c rt" style="left:1824px;width:174px">210.00</div>
</div>
<div class="r alt" style="top:210px">
<div class="n"><svg class="abs" style="left:15px;top:6px" width="22" height="28" viewBox="0 0 22 28"><path d="M1 1 L3 2.6 L5 1 L7 2.6 L9 1 L11 2.6 L13 1 L15 2.6 L17 1 L19 2.6 L21 1 V27 L19 25.4 L17 27 L15 25.4 L13 27 L11 25.4 L9 27 L7 25.4 L5 27 L3 25.4 L1 27 Z" fill="#fdfdfd" stroke="#b3b3b3" stroke-width="1.8" stroke-linejoin="miter"/><rect x="4.5" y="8" width="13" height="2.2" fill="#a9a9a9"/><rect x="4.5" y="10.2" width="13" height="10.8" fill="#dadada"/><rect x="5.8" y="11.6" width="4.4" height="1.9" fill="#fafafa"/><rect x="11.8" y="11.6" width="4.6" height="1.9" fill="#fafafa"/><rect x="5.8" y="15.2" width="4.4" height="1.9" fill="#fafafa"/><rect x="11.8" y="15.2" width="4.6" height="1.9" fill="#fafafa"/><rect x="4.5" y="18.4" width="5.6" height="3" fill="#f3f3f3"/><rect x="11.8" y="18.6" width="4.6" height="1.2" fill="#fafafa"/><rect x="10.6" y="19.9" width="6.9" height="1.9" fill="#a9a9a9"/></svg></div>
<div class="c" style="left:64px;width:146px;">05.12.2023</div>
<div class="c" style="left:224px;width:316px;">Superfritz Hanz, SuperHANZ</div>
<div class="c" style="left:554px;width:396px;">Spesen</div>
<svg class="abs" style="left:970px;top:8px" width="18" height="24" fill="#b6b6b6" viewBox="0 0 18 24"><path d="M0 0 L1.8 1.8 L3.6 0 L5.4 1.8 L7.2 0 L9 1.8 L10.8 0 L12.6 1.8 L14.4 0 L16.2 1.8 L18 0 V5.6 H0 Z M0 8.4 H18 V24 L16.2 22.2 L14.4 24 L12.6 22.2 L10.8 24 L9 22.2 L7.2 24 L5.4 22.2 L3.6 24 L1.8 22.2 L0 24 Z"/></svg>
<div class="c" style="left:1000px;width:138px">ER-2212051</div>
<svg class="abs" style="left:1154px;top:9px" width="24" height="24" fill="#b5b5b5" viewBox="0 0 24 24"><path d="M12 0.5 L23.5 6 V7.6 H0.5 V6 Z M3.6 9 H7.3 V17.6 H3.6 Z M10.1 9 H13.9 V17.6 H10.1 Z M16.7 9 H20.4 V17.6 H16.7 Z M2.6 18.6 H21.4 L23.8 23.4 H0.2 Z"/></svg>
<div class="c" style="left:1188px;width:232px">4200 Warenaufwand</div>
<svg class="abs" style="left:1436px;top:9px" width="24" height="24" fill="#b5b5b5" viewBox="0 0 24 24"><path d="M12 0.5 L23.5 6 V7.6 H0.5 V6 Z M3.6 9 H7.3 V17.6 H3.6 Z M10.1 9 H13.9 V17.6 H10.1 Z M16.7 9 H20.4 V17.6 H16.7 Z M2.6 18.6 H21.4 L23.8 23.4 H0.2 Z"/></svg>
<div class="c" style="left:1470px;width:232px">2000 Kreditoren</div>
<div class="c" style="left:1716px;width:106px;">CHF</div>
<div class="c rt" style="left:1824px;width:174px">100.00</div>
</div>
<div class="r" style="top:252px">
<div class="n"><svg class="abs" style="left:15px;top:6px" width="22" height="28" viewBox="0 0 22 28"><path d="M1 1 L3 2.6 L5 1 L7 2.6 L9 1 L11 2.6 L13 1 L15 2.6 L17 1 L19 2.6 L21 1 V27 L19 25.4 L17 27 L15 25.4 L13 27 L11 25.4 L9 27 L7 25.4 L5 27 L3 25.4 L1 27 Z" fill="#fdfdfd" stroke="#b3b3b3" stroke-width="1.8" stroke-linejoin="miter"/><rect x="4.5" y="8" width="13" height="2.2" fill="#a9a9a9"/><rect x="4.5" y="10.2" width="13" height="10.8" fill="#dadada"/><rect x="5.8" y="11.6" width="4.4" height="1.9" fill="#fafafa"/><rect x="11.8" y="11.6" width="4.6" height="1.9" fill="#fafafa"/><rect x="5.8" y="15.2" width="4.4" height="1.9" fill="#fafafa"/><rect x="11.8" y="15.2" width="4.6" height="1.9" fill="#fafafa"/><rect x="4.5" y="18.4" width="5.6" height="3" fill="#f3f3f3"/><rect x="11.8" y="18.6" width="4.6" height="1.2" fill="#fafafa"/><rect x="10.6" y="19.9" width="6.9" height="1.9" fill="#a9a9a9"/></svg></div>
<div class="c" style="left:64px;width:146px;">03.12.2023</div>
<div class="c" style="left:224px;width:316px;">Jasmin Bucher, Bucherinform...</div>
<div class="c" style="left:554px;width:396px;">Consulting Webentwicklung Monatsab...</div>
<svg class="abs" style="left:970px;top:8px" width="18" height="24" fill="#b6b6b6" viewBox="0 0 18 24"><path d="M0 0 L1.8 1.8 L3.6 0 L5.4 1.8 L7.2 0 L9 1.8 L10.8 0 L12.6 1.8 L14.4 0 L16.2 1.8 L18 0 V5.6 H0 Z M0 8.4 H18 V24 L16.2 22.2 L14.4 24 L12.6 22.2 L10.8 24 L9 22.2 L7.2 24 L5.4 22.2 L3.6 24 L1.8 22.2 L0 24 Z"/></svg>
<div class="c" style="left:1000px;width:138px">RE-2212031</div>
<svg class="abs" style="left:1154px;top:9px" width="24" height="24" fill="#b5b5b5" viewBox="0 0 24 24"><path d="M12 0.5 L23.5 6 V7.6 H0.5 V6 Z M3.6 9 H7.3 V17.6 H3.6 Z M10.1 9 H13.9 V17.6 H10.1 Z M16.7 9 H20.4 V17.6 H16.7 Z M2.6 18.6 H21.4 L23.8 23.4 H0.2 Z"/></svg>
<div class="c" style="left:1188px;width:232px">1100 Debitoren</div>
<svg class="abs" style="left:1436px;top:9px" width="24" height="24" fill="#b5b5b5" viewBox="0 0 24 24"><path d="M12 0.5 L23.5 6 V7.6 H0.5 V6 Z M3.6 9 H7.3 V17.6 H3.6 Z M10.1 9 H13.9 V17.6 H10.1 Z M16.7 9 H20.4 V17.6 H16.7 Z M2.6 18.6 H21.4 L23.8 23.4 H0.2 Z"/></svg>
<div class="c" style="left:1470px;width:232px">3200 Handelsertrag</div>
<div class="c" style="left:1716px;width:106px;">CHF</div>
<div class="c rt" style="left:1824px;width:174px">26.95</div>
</div>
<div class="r alt" style="top:294px">
<div class="n"><svg class="abs" style="left:15px;top:6px" width="22" height="28" viewBox="0 0 22 28"><path d="M1 1 L3 2.6 L5 1 L7 2.6 L9 1 L11 2.6 L13 1 L15 2.6 L17 1 L19 2.6 L21 1 V27 L19 25.4 L17 27 L15 25.4 L13 27 L11 25.4 L9 27 L7 25.4 L5 27 L3 25.4 L1 27 Z" fill="#fdfdfd" stroke="#b3b3b3" stroke-width="1.8" stroke-linejoin="miter"/><rect x="4.5" y="8" width="13" height="2.2" fill="#a9a9a9"/><rect x="4.5" y="10.2" width="13" height="10.8" fill="#dadada"/><rect x="5.8" y="11.6" width="4.4" height="1.9" fill="#fafafa"/><rect x="11.8" y="11.6" width="4.6" height="1.9" fill="#fafafa"/><rect x="5.8" y="15.2" width="4.4" height="1.9" fill="#fafafa"/><rect x="11.8" y="15.2" width="4.6" height="1.9" fill="#fafafa"/><rect x="4.5" y="18.4" width="5.6" height="3" fill="#f3f3f3"/><rect x="11.8" y="18.6" width="4.6" height="1.2" fill="#fafafa"/><rect x="10.6" y="19.9" width="6.9" height="1.9" fill="#a9a9a9"/></svg></div>
<div class="c" style="left:64px;width:146px;">03.12.2023</div>
<div class="c" style="left:224px;width:316px;">Jasmin Bucher, Bucherinform...</div>
<div class="c" style="left:554px;width:396px;">Consulting Webentwicklung Monatsab...</div>
<svg class="abs" style="left:970px;top:8px" width="18" height="24" fill="#b6b6b6" viewBox="0 0 18 24"><path d="M0 0 L1.8 1.8 L3.6 0 L5.4 1.8 L7.2 0 L9 1.8 L10.8 0 L12.6 1.8 L14.4 0 L16.2 1.8 L18 0 V5.6 H0 Z M0 8.4 H18 V24 L16.2 22.2 L14.4 24 L12.6 22.2 L10.8 24 L9 22.2 L7.2 24 L5.4 22.2 L3.6 24 L1.8 22.2 L0 24 Z"/></svg>
<div class="c" style="left:1000px;width:138px">RE-2212031</div>
<svg class="abs" style="left:1154px;top:9px" width="24" height="24" fill="#b5b5b5" viewBox="0 0 24 24"><path d="M12 0.5 L23.5 6 V7.6 H0.5 V6 Z M3.6 9 H7.3 V17.6 H3.6 Z M10.1 9 H13.9 V17.6 H10.1 Z M16.7 9 H20.4 V17.6 H16.7 Z M2.6 18.6 H21.4 L23.8 23.4 H0.2 Z"/></svg>
<div class="c" style="left:1188px;width:232px">1100 Debitoren</div>
<svg class="abs" style="left:1436px;top:9px" width="24" height="24" fill="#b5b5b5" viewBox="0 0 24 24"><path d="M12 0.5 L23.5 6 V7.6 H0.5 V6 Z M3.6 9 H7.3 V17.6 H3.6 Z M10.1 9 H13.9 V17.6 H10.1 Z M16.7 9 H20.4 V17.6 H16.7 Z M2.6 18.6 H21.4 L23.8 23.4 H0.2 Z"/></svg>
<div class="c" style="left:1470px;width:232px">3403 Ertrag aus Web...</div>
<div class="c" style="left:1716px;width:106px;">CHF</div>
<div class="c rt" style="left:1824px;width:174px">2'563.26</div>
</div>
<div class="r" style="top:336px">
<div class="n"><div class="badge">2</div></div>
<div class="c" style="left:64px;width:146px;">30.11.2023</div>
<div class="c" style="left:224px;width:316px;">Superfritz Hanz, SuperHANZ</div>
<div class="c" style="left:554px;width:396px;">GV</div>
<div class="c" style="left:964px;width:174px;">422</div>
<svg class="abs" style="left:1154px;top:9px" width="24" height="24" fill="#b5b5b5" viewBox="0 0 24 24"><path d="M12 0.5 L23.5 6 V7.6 H0.5 V6 Z M3.6 9 H7.3 V17.6 H3.6 Z M10.1 9 H13.9 V17.6 H10.1 Z M16.7 9 H20.4 V17.6 H16.7 Z M2.6 18.6 H21.4 L23.8 23.4 H0.2 Z"/></svg>
<div class="c" style="left:1188px;width:232px">6700 Übriger Betrieb...</div>
<svg class="abs" style="left:1436px;top:9px" width="24" height="24" fill="#b5b5b5" viewBox="0 0 24 24"><path d="M12 0.5 L23.5 6 V7.6 H0.5 V6 Z M3.6 9 H7.3 V17.6 H3.6 Z M10.1 9 H13.9 V17.6 H10.1 Z M16.7 9 H20.4 V17.6 H16.7 Z M2.6 18.6 H21.4 L23.8 23.4 H0.2 Z"/></svg>
<div class="c" style="left:1470px;width:232px">1100 Debitoren</div>
<div class="c" style="left:1716px;width:106px;">CHF</div>
<div class="c rt" style="left:1824px;width:174px">100.00</div>
</div>
<div class="r alt" style="top:378px">
<div class="n"></div>
<div class="c" style="left:64px;width:146px;">27.11.2023</div>
<div class="c" style="left:224px;width:316px;">Kira Gruber, Immobilien Gruber</div>
<div class="c" style="left:554px;width:396px;">Miete Büroraum</div>
<div class="c" style="left:964px;width:174px;">421</div>
<svg class="abs" style="left:1154px;top:9px" width="24" height="24" fill="#b5b5b5" viewBox="0 0 24 24"><path d="M12 0.5 L23.5 6 V7.6 H0.5 V6 Z M3.6 9 H7.3 V17.6 H3.6 Z M10.1 9 H13.9 V17.6 H10.1 Z M16.7 9 H20.4 V17.6 H16.7 Z M2.6 18.6 H21.4 L23.8 23.4 H0.2 Z"/></svg>
<div class="c" style="left:1188px;width:232px">6000 Raumaufwand</div>
<svg class="abs" style="left:1436px;top:9px" width="24" height="24" fill="#b5b5b5" viewBox="0 0 24 24"><path d="M12 0.5 L23.5 6 V7.6 H0.5 V6 Z M3.6 9 H7.3 V17.6 H3.6 Z M10.1 9 H13.9 V17.6 H10.1 Z M16.7 9 H20.4 V17.6 H16.7 Z M2.6 18.6 H21.4 L23.8 23.4 H0.2 Z"/></svg>
<div class="c" style="left:1470px;width:232px">1020 Bank</div>
<div class="c" style="left:1716px;width:106px;">CHF</div>
<div class="c rt" style="left:1824px;width:174px">1'450.00</div>
</div>
<div class="r" style="top:420px">
<div class="n"></div>
<div class="c" style="left:64px;width:146px;">25.11.2023</div>
<div class="c" style="left:224px;width:316px;">Maria Muster, Maria Muster</div>
<div class="c" style="left:554px;width:396px;">Lohnzahlung</div>
<div class="c" style="left:964px;width:174px;">420</div>
<svg class="abs" style="left:1154px;top:9px" width="24" height="24" fill="#b5b5b5" viewBox="0 0 24 24"><path d="M12 0.5 L23.5 6 V7.6 H0.5 V6 Z M3.6 9 H7.3 V17.6 H3.6 Z M10.1 9 H13.9 V17.6 H10.1 Z M16.7 9 H20.4 V17.6 H16.7 Z M2.6 18.6 H21.4 L23.8 23.4 H0.2 Z"/></svg>
<div class="c" style="left:1188px;width:232px">5000 Lohnaufwand</div>
<svg class="abs" style="left:1436px;top:9px" width="24" height="24" fill="#b5b5b5" viewBox="0 0 24 24"><path d="M12 0.5 L23.5 6 V7.6 H0.5 V6 Z M3.6 9 H7.3 V17.6 H3.6 Z M10.1 9 H13.9 V17.6 H10.1 Z M16.7 9 H20.4 V17.6 H16.7 Z M2.6 18.6 H21.4 L23.8 23.4 H0.2 Z"/></svg>
<div class="c" style="left:1470px;width:232px">1020 Bank</div>
<div class="c" style="left:1716px;width:106px;">CHF</div>
<div class="c rt" style="left:1824px;width:174px">4'500.00</div>
</div>
<div class="r alt" style="top:462px">
<div class="n"><svg class="abs" style="left:15px;top:6px" width="22" height="28" viewBox="0 0 22 28"><path d="M1 1 L3 2.6 L5 1 L7 2.6 L9 1 L11 2.6 L13 1 L15 2.6 L17 1 L19 2.6 L21 1 V27 L19 25.4 L17 27 L15 25.4 L13 27 L11 25.4 L9 27 L7 25.4 L5 27 L3 25.4 L1 27 Z" fill="#fdfdfd" stroke="#b3b3b3" stroke-width="1.8" stroke-linejoin="miter"/><rect x="4.5" y="8" width="13" height="2.2" fill="#a9a9a9"/><rect x="4.5" y="10.2" width="13" height="10.8" fill="#dadada"/><rect x="5.8" y="11.6" width="4.4" height="1.9" fill="#fafafa"/><rect x="11.8" y="11.6" width="4.6" height="1.9" fill="#fafafa"/><rect x="5.8" y="15.2" width="4.4" height="1.9" fill="#fafafa"/><rect x="11.8" y="15.2" width="4.6" height="1.9" fill="#fafafa"/><rect x="4.5" y="18.4" width="5.6" height="3" fill="#f3f3f3"/><rect x="11.8" y="18.6" width="4.6" height="1.2" fill="#fafafa"/><rect x="10.6" y="19.9" width="6.9" height="1.9" fill="#a9a9a9"/></svg></div>
<div class="c" style="left:64px;width:146px;">15.11.2023</div>
<div class="c" style="left:224px;width:316px;">Matthias Erb, Erb Consulting ...</div>
<div class="c" style="left:554px;width:396px;">Website Relaunch</div>
<svg class="abs" style="left:970px;top:8px" width="18" height="24" fill="#b6b6b6" viewBox="0 0 18 24"><path d="M0 0 L1.8 1.8 L3.6 0 L5.4 1.8 L7.2 0 L9 1.8 L10.8 0 L12.6 1.8 L14.4 0 L16.2 1.8 L18 0 V5.6 H0 Z M0 8.4 H18 V24 L16.2 22.2 L14.4 24 L12.6 22.2 L10.8 24 L9 22.2 L7.2 24 L5.4 22.2 L3.6 24 L1.8 22.2 L0 24 Z"/></svg>
<div class="c" style="left:1000px;width:138px">RE-2211151</div>
<svg class="abs" style="left:1154px;top:9px" width="24" height="24" fill="#b5b5b5" viewBox="0 0 24 24"><path d="M12 0.5 L23.5 6 V7.6 H0.5 V6 Z M3.6 9 H7.3 V17.6 H3.6 Z M10.1 9 H13.9 V17.6 H10.1 Z M16.7 9 H20.4 V17.6 H16.7 Z M2.6 18.6 H21.4 L23.8 23.4 H0.2 Z"/></svg>
<div class="c" style="left:1188px;width:232px">1100 Debitoren</div>
<svg class="abs" style="left:1436px;top:9px" width="24" height="24" fill="#b5b5b5" viewBox="0 0 24 24"><path d="M12 0.5 L23.5 6 V7.6 H0.5 V6 Z M3.6 9 H7.3 V17.6 H3.6 Z M10.1 9 H13.9 V17.6 H10.1 Z M16.7 9 H20.4 V17.6 H16.7 Z M2.6 18.6 H21.4 L23.8 23.4 H0.2 Z"/></svg>
<div class="c" style="left:1470px;width:232px">3403 Ertrag aus Web...</div>
<div class="c" style="left:1716px;width:106px;">CHF</div>
<div class="c rt" style="left:1824px;width:174px">3'769.50</div>
</div>
<div class="r" style="top:504px">
<div class="n"><svg class="abs" style="left:15px;top:6px" width="22" height="28" viewBox="0 0 22 28"><path d="M1 1 L3 2.6 L5 1 L7 2.6 L9 1 L11 2.6 L13 1 L15 2.6 L17 1 L19 2.6 L21 1 V27 L19 25.4 L17 27 L15 25.4 L13 27 L11 25.4 L9 27 L7 25.4 L5 27 L3 25.4 L1 27 Z" fill="#fdfdfd" stroke="#b3b3b3" stroke-width="1.8" stroke-linejoin="miter"/><rect x="4.5" y="8" width="13" height="2.2" fill="#a9a9a9"/><rect x="4.5" y="10.2" width="13" height="10.8" fill="#dadada"/><rect x="5.8" y="11.6" width="4.4" height="1.9" fill="#fafafa"/><rect x="11.8" y="11.6" width="4.6" height="1.9" fill="#fafafa"/><rect x="5.8" y="15.2" width="4.4" height="1.9" fill="#fafafa"/><rect x="11.8" y="15.2" width="4.6" height="1.9" fill="#fafafa"/><rect x="4.5" y="18.4" width="5.6" height="3" fill="#f3f3f3"/><rect x="11.8" y="18.6" width="4.6" height="1.2" fill="#fafafa"/><rect x="10.6" y="19.9" width="6.9" height="1.9" fill="#a9a9a9"/></svg></div>
<div class="c" style="left:64px;width:146px;">14.11.2023</div>
<div class="c" style="left:224px;width:316px;">Jasmin Bucher, Bucherinform...</div>
<div class="c" style="left:554px;width:396px;">Zahlung</div>
<svg class="abs" style="left:970px;top:8px" width="18" height="24" fill="#b6b6b6" viewBox="0 0 18 24"><path d="M0 0 L1.8 1.8 L3.6 0 L5.4 1.8 L7.2 0 L9 1.8 L10.8 0 L12.6 1.8 L14.4 0 L16.2 1.8 L18 0 V5.6 H0 Z M0 8.4 H18 V24 L16.2 22.2 L14.4 24 L12.6 22.2 L10.8 24 L9 22.2 L7.2 24 L5.4 22.2 L3.6 24 L1.8 22.2 L0 24 Z"/></svg>
<div class="c" style="left:1000px;width:138px">RE-2208291</div>
<svg class="abs" style="left:1154px;top:9px" width="24" height="24" fill="#b5b5b5" viewBox="0 0 24 24"><path d="M12 0.5 L23.5 6 V7.6 H0.5 V6 Z M3.6 9 H7.3 V17.6 H3.6 Z M10.1 9 H13.9 V17.6 H10.1 Z M16.7 9 H20.4 V17.6 H16.7 Z M2.6 18.6 H21.4 L23.8 23.4 H0.2 Z"/></svg>
<div class="c" style="left:1188px;width:232px">1020 Bank</div>
<svg class="abs" style="left:1436px;top:9px" width="24" height="24" fill="#b5b5b5" viewBox="0 0 24 24"><path d="M12 0.5 L23.5 6 V7.6 H0.5 V6 Z M3.6 9 H7.3 V17.6 H3.6 Z M10.1 9 H13.9 V17.6 H10.1 Z M16.7 9 H20.4 V17.6 H16.7 Z M2.6 18.6 H21.4 L23.8 23.4 H0.2 Z"/></svg>
<div class="c" style="left:1470px;width:232px">1100 Debitoren</div>
<div class="c" style="left:1716px;width:106px;">CHF</div>
<div class="c rt" style="left:1824px;width:174px">1'563.26</div>
</div>
<div class="r alt" style="top:546px">
<div class="n"><svg class="abs" style="left:15px;top:6px" width="22" height="28" viewBox="0 0 22 28"><path d="M1 1 L3 2.6 L5 1 L7 2.6 L9 1 L11 2.6 L13 1 L15 2.6 L17 1 L19 2.6 L21 1 V27 L19 25.4 L17 27 L15 25.4 L13 27 L11 25.4 L9 27 L7 25.4 L5 27 L3 25.4 L1 27 Z" fill="#fdfdfd" stroke="#b3b3b3" stroke-width="1.8" stroke-linejoin="miter"/><rect x="4.5" y="8" width="13" height="2.2" fill="#a9a9a9"/><rect x="4.5" y="10.2" width="13" height="10.8" fill="#dadada"/><rect x="5.8" y="11.6" width="4.4" height="1.9" fill="#fafafa"/><rect x="11.8" y="11.6" width="4.6" height="1.9" fill="#fafafa"/><rect x="5.8" y="15.2" width="4.4" height="1.9" fill="#fafafa"/><rect x="11.8" y="15.2" width="4.6" height="1.9" fill="#fafafa"/><rect x="4.5" y="18.4" width="5.6" height="3" fill="#f3f3f3"/><rect x="11.8" y="18.6" width="4.6" height="1.2" fill="#fafafa"/><rect x="10.6" y="19.9" width="6.9" height="1.9" fill="#a9a9a9"/></svg></div>
<div class="c" style="left:64px;width:146px;">14.11.2023</div>
<div class="c" style="left:224px;width:316px;">Jasmin Bucher, Bucherinform...</div>
<div class="c" style="left:554px;width:396px;">Zahlung</div>
<svg class="abs" style="left:970px;top:8px" width="18" height="24" fill="#b6b6b6" viewBox="0 0 18 24"><path d="M0 0 L1.8 1.8 L3.6 0 L5.4 1.8 L7.2 0 L9 1.8 L10.8 0 L12.6 1.8 L14.4 0 L16.2 1.8 L18 0 V5.6 H0 Z M0 8.4 H18 V24 L16.2 22.2 L14.4 24 L12.6 22.2 L10.8 24 L9 22.2 L7.2 24 L5.4 22.2 L3.6 24 L1.8 22.2 L0 24 Z"/></svg>
<div class="c" style="left:1000px;width:138px">RE-2208031</div>
<svg class="abs" style="left:1154px;top:9px" width="24" height="24" fill="#b5b5b5" viewBox="0 0 24 24"><path d="M12 0.5 L23.5 6 V7.6 H0.5 V6 Z M3.6 9 H7.3 V17.6 H3.6 Z M10.1 9 H13.9 V17.6 H10.1 Z M16.7 9 H20.4 V17.6 H16.7 Z M2.6 18.6 H21.4 L23.8 23.4 H0.2 Z"/></svg>
<div class="c" style="left:1188px;width:232px">1020 Bank</div>
<svg class="abs" style="left:1436px;top:9px" width="24" height="24" fill="#b5b5b5" viewBox="0 0 24 24"><path d="M12 0.5 L23.5 6 V7.6 H0.5 V6 Z M3.6 9 H7.3 V17.6 H3.6 Z M10.1 9 H13.9 V17.6 H10.1 Z M16.7 9 H20.4 V17.6 H16.7 Z M2.6 18.6 H21.4 L23.8 23.4 H0.2 Z"/></svg>
<div class="c" style="left:1470px;width:232px">1100 Debitoren</div>
<div class="c" style="left:1716px;width:106px;">CHF</div>
<div class="c rt" style="left:1824px;width:174px">2'563.26</div>
</div>
<div class="r" style="top:588px">
<div class="n"><svg class="abs" style="left:15px;top:6px" width="22" height="28" viewBox="0 0 22 28"><path d="M1 1 L3 2.6 L5 1 L7 2.6 L9 1 L11 2.6 L13 1 L15 2.6 L17 1 L19 2.6 L21 1 V27 L19 25.4 L17 27 L15 25.4 L13 27 L11 25.4 L9 27 L7 25.4 L5 27 L3 25.4 L1 27 Z" fill="#fdfdfd" stroke="#b3b3b3" stroke-width="1.8" stroke-linejoin="miter"/><rect x="4.5" y="8" width="13" height="2.2" fill="#a9a9a9"/><rect x="4.5" y="10.2" width="13" height="10.8" fill="#dadada"/><rect x="5.8" y="11.6" width="4.4" height="1.9" fill="#fafafa"/><rect x="11.8" y="11.6" width="4.6" height="1.9" fill="#fafafa"/><rect x="5.8" y="15.2" width="4.4" height="1.9" fill="#fafafa"/><rect x="11.8" y="15.2" width="4.6" height="1.9" fill="#fafafa"/><rect x="4.5" y="18.4" width="5.6" height="3" fill="#f3f3f3"/><rect x="11.8" y="18.6" width="4.6" height="1.2" fill="#fafafa"/><rect x="10.6" y="19.9" width="6.9" height="1.9" fill="#a9a9a9"/></svg></div>
<div class="c" style="left:64px;width:146px;">14.11.2023</div>
<div class="c" style="left:224px;width:316px;">Aaron Martinez, Rohrbau AG</div>
<div class="c" style="left:554px;width:396px;">Zahlung</div>
<svg class="abs" style="left:970px;top:8px" width="18" height="24" fill="#b6b6b6" viewBox="0 0 18 24"><path d="M0 0 L1.8 1.8 L3.6 0 L5.4 1.8 L7.2 0 L9 1.8 L10.8 0 L12.6 1.8 L14.4 0 L16.2 1.8 L18 0 V5.6 H0 Z M0 8.4 H18 V24 L16.2 22.2 L14.4 24 L12.6 22.2 L10.8 24 L9 22.2 L7.2 24 L5.4 22.2 L3.6 24 L1.8 22.2 L0 24 Z"/></svg>
<div class="c" style="left:1000px;width:138px">RE-2208041</div>
<svg class="abs" style="left:1154px;top:9px" width="24" height="24" fill="#b5b5b5" viewBox="0 0 24 24"><path d="M12 0.5 L23.5 6 V7.6 H0.5 V6 Z M3.6 9 H7.3 V17.6 H3.6 Z M10.1 9 H13.9 V17.6 H10.1 Z M16.7 9 H20.4 V17.6 H16.7 Z M2.6 18.6 H21.4 L23.8 23.4 H0.2 Z"/></svg>
<div class="c" style="left:1188px;width:232px">1020 Bank</div>
<svg class="abs" style="left:1436px;top:9px" width="24" height="24" fill="#b5b5b5" viewBox="0 0 24 24"><path d="M12 0.5 L23.5 6 V7.6 H0.5 V6 Z M3.6 9 H7.3 V17.6 H3.6 Z M10.1 9 H13.9 V17.6 H10.1 Z M16.7 9 H20.4 V17.6 H16.7 Z M2.6 18.6 H21.4 L23.8 23.4 H0.2 Z"/></svg>
<div class="c" style="left:1470px;width:232px">1100 Debitoren</div>
<div class="c" style="left:1716px;width:106px;">CHF</div>
<div class="c rt" style="left:1824px;width:174px">3'394.16</div>
</div>
<div class="r alt" style="top:630px">
<div class="n"><svg class="abs" style="left:15px;top:6px" width="22" height="28" viewBox="0 0 22 28"><path d="M1 1 L3 2.6 L5 1 L7 2.6 L9 1 L11 2.6 L13 1 L15 2.6 L17 1 L19 2.6 L21 1 V27 L19 25.4 L17 27 L15 25.4 L13 27 L11 25.4 L9 27 L7 25.4 L5 27 L3 25.4 L1 27 Z" fill="#fdfdfd" stroke="#b3b3b3" stroke-width="1.8" stroke-linejoin="miter"/><rect x="4.5" y="8" width="13" height="2.2" fill="#a9a9a9"/><rect x="4.5" y="10.2" width="13" height="10.8" fill="#dadada"/><rect x="5.8" y="11.6" width="4.4" height="1.9" fill="#fafafa"/><rect x="11.8" y="11.6" width="4.6" height="1.9" fill="#fafafa"/><rect x="5.8" y="15.2" width="4.4" height="1.9" fill="#fafafa"/><rect x="11.8" y="15.2" width="4.6" height="1.9" fill="#fafafa"/><rect x="4.5" y="18.4" width="5.6" height="3" fill="#f3f3f3"/><rect x="11.8" y="18.6" width="4.6" height="1.2" fill="#fafafa"/><rect x="10.6" y="19.9" width="6.9" height="1.9" fill="#a9a9a9"/></svg></div>
<div class="c" style="left:64px;width:146px;">14.11.2023</div>
<div class="c" style="left:224px;width:316px;">Jasmin Bucher, Bucherinform...</div>
<div class="c" style="left:554px;width:396px;">Zahlung</div>
<svg class="abs" style="left:970px;top:8px" width="18" height="24" fill="#b6b6b6" viewBox="0 0 18 24"><path d="M0 0 L1.8 1.8 L3.6 0 L5.4 1.8 L7.2 0 L9 1.8 L10.8 0 L12.6 1.8 L14.4 0 L16.2 1.8 L18 0 V5.6 H0 Z M0 8.4 H18 V24 L16.2 22.2 L14.4 24 L12.6 22.2 L10.8 24 L9 22.2 L7.2 24 L5.4 22.2 L3.6 24 L1.8 22.2 L0 24 Z"/></svg>
<div class="c" style="left:1000px;width:138px">RE-2207031</div>
<svg class="abs" style="left:1154px;top:9px" width="24" height="24" fill="#b5b5b5" viewBox="0 0 24 24"><path d="M12 0.5 L23.5 6 V7.6 H0.5 V6 Z M3.6 9 H7.3 V17.6 H3.6 Z M10.1 9 H13.9 V17.6 H10.1 Z M16.7 9 H20.4 V17.6 H16.7 Z M2.6 18.6 H21.4 L23.8 23.4 H0.2 Z"/></svg>
<div class="c" style="left:1188px;width:232px">1020 Bank</div>
<svg class="abs" style="left:1436px;top:9px" width="24" height="24" fill="#b5b5b5" viewBox="0 0 24 24"><path d="M12 0.5 L23.5 6 V7.6 H0.5 V6 Z M3.6 9 H7.3 V17.6 H3.6 Z M10.1 9 H13.9 V17.6 H10.1 Z M16.7 9 H20.4 V17.6 H16.7 Z M2.6 18.6 H21.4 L23.8 23.4 H0.2 Z"/></svg>
<div class="c" style="left:1470px;width:232px">1100 Debitoren</div>
<div class="c" style="left:1716px;width:106px;">CHF</div>
<div class="c rt" style="left:1824px;width:174px">2'563.26</div>
</div>
<div class="r" style="top:672px">
<div class="n"><svg class="abs" style="left:15px;top:6px" width="22" height="28" viewBox="0 0 22 28"><path d="M1 1 L3 2.6 L5 1 L7 2.6 L9 1 L11 2.6 L13 1 L15 2.6 L17 1 L19 2.6 L21 1 V27 L19 25.4 L17 27 L15 25.4 L13 27 L11 25.4 L9 27 L7 25.4 L5 27 L3 25.4 L1 27 Z" fill="#fdfdfd" stroke="#b3b3b3" stroke-width="1.8" stroke-linejoin="miter"/><rect x="4.5" y="8" width="13" height="2.2" fill="#a9a9a9"/><rect x="4.5" y="10.2" width="13" height="10.8" fill="#dadada"/><rect x="5.8" y="11.6" width="4.4" height="1.9" fill="#fafafa"/><rect x="11.8" y="11.6" width="4.6" height="1.9" fill="#fafafa"/><rect x="5.8" y="15.2" width="4.4" height="1.9" fill="#fafafa"/><rect x="11.8" y="15.2" width="4.6" height="1.9" fill="#fafafa"/><rect x="4.5" y="18.4" width="5.6" height="3" fill="#f3f3f3"/><rect x="11.8" y="18.6" width="4.6" height="1.2" fill="#fafafa"/><rect x="10.6" y="19.9" width="6.9" height="1.9" fill="#a9a9a9"/></svg></div>
<div class="c" style="left:64px;width:146px;">14.11.2023</div>
<div class="c" style="left:224px;width:316px;">Jasmin Bucher, Bucherinform...</div>
<div class="c" style="left:554px;width:396px;">Zahlung</div>
<svg class="abs" style="left:970px;top:8px" width="18" height="24" fill="#b6b6b6" viewBox="0 0 18 24"><path d="M0 0 L1.8 1.8 L3.6 0 L5.4 1.8 L7.2 0 L9 1.8 L10.8 0 L12.6 1.8 L14.4 0 L16.2 1.8 L18 0 V5.6 H0 Z M0 8.4 H18 V24 L16.2 22.2 L14.4 24 L12.6 22.2 L10.8 24 L9 22.2 L7.2 24 L5.4 22.2 L3.6 24 L1.8 22.2 L0 24 Z"/></svg>
<div class="c" style="left:1000px;width:138px">RE-2206031</div>
<svg class="abs" style="left:1154px;top:9px" width="24" height="24" fill="#b5b5b5" viewBox="0 0 24 24"><path d="M12 0.5 L23.5 6 V7.6 H0.5 V6 Z M3.6 9 H7.3 V17.6 H3.6 Z M10.1 9 H13.9 V17.6 H10.1 Z M16.7 9 H20.4 V17.6 H16.7 Z M2.6 18.6 H21.4 L23.8 23.4 H0.2 Z"/></svg>
<div class="c" style="left:1188px;width:232px">1020 Bank</div>
<svg class="abs" style="left:1436px;top:9px" width="24" height="24" fill="#b5b5b5" viewBox="0 0 24 24"><path d="M12 0.5 L23.5 6 V7.6 H0.5 V6 Z M3.6 9 H7.3 V17.6 H3.6 Z M10.1 9 H13.9 V17.6 H10.1 Z M16.7 9 H20.4 V17.6 H16.7 Z M2.6 18.6 H21.4 L23.8 23.4 H0.2 Z"/></svg>
<div class="c" style="left:1470px;width:232px">1100 Debitoren</div>
<div class="c" style="left:1716px;width:106px;">CHF</div>
<div class="c rt" style="left:1824px;width:174px">2'563.26</div>
</div>
<div class="r alt" style="top:714px">
<div class="n"><svg class="abs" style="left:15px;top:6px" width="22" height="28" viewBox="0 0 22 28"><path d="M1 1 L3 2.6 L5 1 L7 2.6 L9 1 L11 2.6 L13 1 L15 2.6 L17 1 L19 2.6 L21 1 V27 L19 25.4 L17 27 L15 25.4 L13 27 L11 25.4 L9 27 L7 25.4 L5 27 L3 25.4 L1 27 Z" fill="#fdfdfd" stroke="#b3b3b3" stroke-width="1.8" stroke-linejoin="miter"/><rect x="4.5" y="8" width="13" height="2.2" fill="#a9a9a9"/><rect x="4.5" y="10.2" width="13" height="10.8" fill="#dadada"/><rect x="5.8" y="11.6" width="4.4" height="1.9" fill="#fafafa"/><rect x="11.8" y="11.6" width="4.6" height="1.9" fill="#fafafa"/><rect x="5.8" y="15.2" width="4.4" height="1.9" fill="#fafafa"/><rect x="11.8" y="15.2" width="4.6" height="1.9" fill="#fafafa"/><rect x="4.5" y="18.4" width="5.6" height="3" fill="#f3f3f3"/><rect x="11.8" y="18.6" width="4.6" height="1.2" fill="#fafafa"/><rect x="10.6" y="19.9" width="6.9" height="1.9" fill="#a9a9a9"/></svg></div>
<div class="c" style="left:64px;width:146px;">14.11.2023</div>
<div class="c" style="left:224px;width:316px;">Bernhard Ober, Ober Bau und...</div>
<div class="c" style="left:554px;width:396px;">Zahlung</div>
<svg class="abs" style="left:970px;top:8px" width="18" height="24" fill="#b6b6b6" viewBox="0 0 18 24"><path d="M0 0 L1.8 1.8 L3.6 0 L5.4 1.8 L7.2 0 L9 1.8 L10.8 0 L12.6 1.8 L14.4 0 L16.2 1.8 L18 0 V5.6 H0 Z M0 8.4 H18 V24 L16.2 22.2 L14.4 24 L12.6 22.2 L10.8 24 L9 22.2 L7.2 24 L5.4 22.2 L3.6 24 L1.8 22.2 L0 24 Z"/></svg>
<div class="c" style="left:1000px;width:138px">RE-2205191</div>
<svg class="abs" style="left:1154px;top:9px" width="24" height="24" fill="#b5b5b5" viewBox="0 0 24 24"><path d="M12 0.5 L23.5 6 V7.6 H0.5 V6 Z M3.6 9 H7.3 V17.6 H3.6 Z M10.1 9 H13.9 V17.6 H10.1 Z M16.7 9 H20.4 V17.6 H16.7 Z M2.6 18.6 H21.4 L23.8 23.4 H0.2 Z"/></svg>
<div class="c" style="left:1188px;width:232px">1020 Bank</div>
<svg class="abs" style="left:1436px;top:9px" width="24" height="24" fill="#b5b5b5" viewBox="0 0 24 24"><path d="M12 0.5 L23.5 6 V7.6 H0.5 V6 Z M3.6 9 H7.3 V17.6 H3.6 Z M10.1 9 H13.9 V17.6 H10.1 Z M16.7 9 H20.4 V17.6 H16.7 Z M2.6 18.6 H21.4 L23.8 23.4 H0.2 Z"/></svg>
<div class="c" style="left:1470px;width:232px">1100 Debitoren</div>
<div class="c" style="left:1716px;width:106px;">CHF</div>
<div class="c rt" style="left:1824px;width:174px">1'950.00</div>
</div>
<div class="r" style="top:756px">
<div class="n"><svg class="abs" style="left:15px;top:6px" width="22" height="28" viewBox="0 0 22 28"><path d="M1 1 L3 2.6 L5 1 L7 2.6 L9 1 L11 2.6 L13 1 L15 2.6 L17 1 L19 2.6 L21 1 V27 L19 25.4 L17 27 L15 25.4 L13 27 L11 25.4 L9 27 L7 25.4 L5 27 L3 25.4 L1 27 Z" fill="#fdfdfd" stroke="#b3b3b3" stroke-width="1.8" stroke-linejoin="miter"/><rect x="4.5" y="8" width="13" height="2.2" fill="#a9a9a9"/><rect x="4.5" y="10.2" width="13" height="10.8" fill="#dadada"/><rect x="5.8" y="11.6" width="4.4" height="1.9" fill="#fafafa"/><rect x="11.8" y="11.6" width="4.6" height="1.9" fill="#fafafa"/><rect x="5.8" y="15.2" width="4.4" height="1.9" fill="#fafafa"/><rect x="11.8" y="15.2" width="4.6" height="1.9" fill="#fafafa"/><rect x="4.5" y="18.4" width="5.6" height="3" fill="#f3f3f3"/><rect x="11.8" y="18.6" width="4.6" height="1.2" fill="#fafafa"/><rect x="10.6" y="19.9" width="6.9" height="1.9" fill="#a9a9a9"/></svg></div>
<div class="c" style="left:64px;width:146px;">14.11.2023</div>
<div class="c" style="left:224px;width:316px;">Ingird Schlüssel, Restaurant ...</div>
<div class="c" style="left:554px;width:396px;">Zahlung</div>
<svg class="abs" style="left:970px;top:8px" width="18" height="24" fill="#b6b6b6" viewBox="0 0 18 24"><path d="M0 0 L1.8 1.8 L3.6 0 L5.4 1.8 L7.2 0 L9 1.8 L10.8 0 L12.6 1.8 L14.4 0 L16.2 1.8 L18 0 V5.6 H0 Z M0 8.4 H18 V24 L16.2 22.2 L14.4 24 L12.6 22.2 L10.8 24 L9 22.2 L7.2 24 L5.4 22.2 L3.6 24 L1.8 22.2 L0 24 Z"/></svg>
<div class="c" style="left:1000px;width:138px">RE-2206212</div>
<svg class="abs" style="left:1154px;top:9px" width="24" height="24" fill="#b5b5b5" viewBox="0 0 24 24"><path d="M12 0.5 L23.5 6 V7.6 H0.5 V6 Z M3.6 9 H7.3 V17.6 H3.6 Z M10.1 9 H13.9 V17.6 H10.1 Z M16.7 9 H20.4 V17.6 H16.7 Z M2.6 18.6 H21.4 L23.8 23.4 H0.2 Z"/></svg>
<div class="c" style="left:1188px;width:232px">1020 Bank</div>
<svg class="abs" style="left:1436px;top:9px" width="24" height="24" fill="#b5b5b5" viewBox="0 0 24 24"><path d="M12 0.5 L23.5 6 V7.6 H0.5 V6 Z M3.6 9 H7.3 V17.6 H3.6 Z M10.1 9 H13.9 V17.6 H10.1 Z M16.7 9 H20.4 V17.6 H16.7 Z M2.6 18.6 H21.4 L23.8 23.4 H0.2 Z"/></svg>
<div class="c" style="left:1470px;width:232px">1100 Debitoren</div>
<div class="c" style="left:1716px;width:106px;">CHF</div>
<div class="c rt" style="left:1824px;width:174px">5'411.93</div>
</div>
<div class="r alt" style="top:798px">
<div class="n"></div>
<div class="c" style="left:64px;width:146px;">10.11.2023</div>
<div class="c" style="left:224px;width:316px;">Internet Provider AG</div>
<div class="c" style="left:554px;width:396px;">Mobiltelefonrechnung</div>
<div class="c" style="left:964px;width:174px;">332</div>
<svg class="abs" style="left:1154px;top:9px" width="24" height="24" fill="#b5b5b5" viewBox="0 0 24 24"><path d="M12 0.5 L23.5 6 V7.6 H0.5 V6 Z M3.6 9 H7.3 V17.6 H3.6 Z M10.1 9 H13.9 V17.6 H10.1 Z M16.7 9 H20.4 V17.6 H16.7 Z M2.6 18.6 H21.4 L23.8 23.4 H0.2 Z"/></svg>
<div class="c" style="left:1188px;width:232px">6570 Informatikaufw...</div>
<svg class="abs" style="left:1436px;top:9px" width="24" height="24" fill="#b5b5b5" viewBox="0 0 24 24"><path d="M12 0.5 L23.5 6 V7.6 H0.5 V6 Z M3.6 9 H7.3 V17.6 H3.6 Z M10.1 9 H13.9 V17.6 H10.1 Z M16.7 9 H20.4 V17.6 H16.7 Z M2.6 18.6 H21.4 L23.8 23.4 H0.2 Z"/></svg>
<div class="c" style="left:1470px;width:232px">1020 Bank</div>
<div class="c" style="left:1716px;width:106px;">CHF</div>
<div class="c rt" style="left:1824px;width:174px">29.35</div>
</div>
<div class="r" style="top:840px">
<div class="n"></div>
<div class="c" style="left:64px;width:146px;">10.11.2023</div>
<div class="c" style="left:224px;width:316px;">Internet Provider AG</div>
<div class="c" style="left:554px;width:396px;">Internet Büro</div>
<div class="c" style="left:964px;width:174px;">333</div>
<svg class="abs" style="left:1154px;top:9px" width="24" height="24" fill="#b5b5b5" viewBox="0 0 24 24"><path d="M12 0.5 L23.5 6 V7.6 H0.5 V6 Z M3.6 9 H7.3 V17.6 H3.6 Z M10.1 9 H13.9 V17.6 H10.1 Z M16.7 9 H20.4 V17.6 H16.7 Z M2.6 18.6 H21.4 L23.8 23.4 H0.2 Z"/></svg>
<div class="c" style="left:1188px;width:232px">6570 Informatikaufw...</div>
<svg class="abs" style="left:1436px;top:9px" width="24" height="24" fill="#b5b5b5" viewBox="0 0 24 24"><path d="M12 0.5 L23.5 6 V7.6 H0.5 V6 Z M3.6 9 H7.3 V17.6 H3.6 Z M10.1 9 H13.9 V17.6 H10.1 Z M16.7 9 H20.4 V17.6 H16.7 Z M2.6 18.6 H21.4 L23.8 23.4 H0.2 Z"/></svg>
<div class="c" style="left:1470px;width:232px">1020 Bank</div>
<div class="c" style="left:1716px;width:106px;">CHF</div>
<div class="c rt" style="left:1824px;width:174px">49.00</div>
</div>
<div class="sb"><div class="thumb"></div></div>
</div>
<div class="pg">
<div class="pgbtn"></div>
<svg class="abs" style="left:17px;top:16px" width="22" height="24" viewBox="0 0 22 24"><rect x="0.500" y="0.500" width="4.400" height="23" fill="#b7bac3"/><path d="M21 0.500 V23.500 L6.500 12 Z" fill="#b7bac3"/></svg><svg class="abs" style="left:67px;top:18px" width="14" height="20" viewBox="0 0 14 20"><path d="M13 0.500 V19.500 L1 10 Z" fill="#b7bac3"/></svg><svg class="abs" style="left:347px;top:18px" width="15" height="20" viewBox="0 0 15 20"><path d="M1 0.500 V19.500 L14 10 Z" fill="#3f74c9"/><path d="M1.300 0.500 V19.500" stroke="#2f5fae" stroke-width="1.200"/></svg><svg class="abs" style="left:391px;top:16px" width="22" height="24" viewBox="0 0 22 24"><rect x="17.100" y="0.500" width="4.400" height="23" fill="#3f74c9"/><path d="M1 0.500 V23.500 L15.500 12 Z" fill="#3f74c9"/></svg><svg class="abs" style="left:442px;top:13px" width="32" height="30" viewBox="0 0 32 30"><g fill="none" stroke="#4a86d4" stroke-width="4.200"><path d="M5 12.500 A10.500 9.500 0 0 1 24 8"/><path d="M27 17.500 A10.500 9.500 0 0 1 8 22"/></g><path d="M19.500 9.500 L30 11 L28.500 1 Z" fill="#4a86d4"/><path d="M12.500 20.500 L2 19 L3.500 29 Z" fill="#4a86d4"/></svg>
<div class="sep" style="left:102px;top:14px;height:28px"></div>
<div class="pgt" style="left:117px">Seite</div>
<div class="pgin"><span>1</span></div>
<div class="pgt" style="left:257px">von 3</div>
<div class="sep" style="left:325px;top:14px;height:28px"></div>
<div class="sep" style="left:428px;top:14px;height:28px"></div>
<div class="pgt" style="letter-spacing:.16px;right:350px">1 Eintrag ausgewählt (Total <b>4'500.00</b>)</div>
<div class="sep" style="left:1834px;top:14px;height:28px"></div>
<div class="pgt" style="left:1850px">Einträge 1 - 100 von 264</div>
<div class="pgt" style="left:2119px">#</div><div class="dd" style="left:2141px;top:27px"></div>
</div>
<div class="lb"></div>
</div></div></div></body></html>
